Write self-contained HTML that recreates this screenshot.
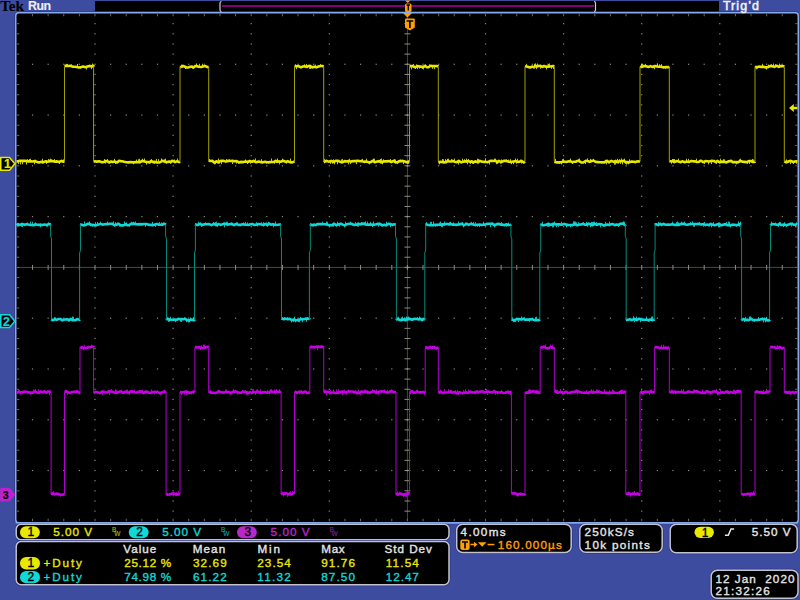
<!DOCTYPE html>
<html><head><meta charset="utf-8"><style>
html,body{margin:0;padding:0;width:800px;height:600px;overflow:hidden;background:#3d4c9e;}
svg{position:absolute;left:0;top:0;display:block}
</style></head><body>
<svg width="800" height="600" viewBox="0 0 800 600"><rect width="800" height="600" fill="#3d4c9e"/><rect x="95" y="1" width="624" height="11" fill="#000"/><rect x="15.75" y="12.75" width="782.5" height="510" rx="3" fill="#000" stroke="#2e3a8a" stroke-width="3"/><rect x="15.75" y="12.75" width="782.5" height="510" rx="3" fill="#000" stroke="#86a8ee" stroke-width="1.5"/><rect x="94.40" y="23.06" width="1.2" height="1.2" fill="#8c8c80"/><rect x="94.40" y="33.21" width="1.2" height="1.2" fill="#8c8c80"/><rect x="94.40" y="43.37" width="1.2" height="1.2" fill="#8c8c80"/><rect x="94.40" y="53.52" width="1.2" height="1.2" fill="#8c8c80"/><rect x="94.40" y="63.68" width="1.2" height="1.2" fill="#8c8c80"/><rect x="94.40" y="73.84" width="1.2" height="1.2" fill="#8c8c80"/><rect x="94.40" y="83.99" width="1.2" height="1.2" fill="#8c8c80"/><rect x="94.40" y="94.15" width="1.2" height="1.2" fill="#8c8c80"/><rect x="94.40" y="104.30" width="1.2" height="1.2" fill="#8c8c80"/><rect x="94.40" y="114.46" width="1.2" height="1.2" fill="#8c8c80"/><rect x="94.40" y="124.62" width="1.2" height="1.2" fill="#8c8c80"/><rect x="94.40" y="134.77" width="1.2" height="1.2" fill="#8c8c80"/><rect x="94.40" y="144.93" width="1.2" height="1.2" fill="#8c8c80"/><rect x="94.40" y="155.08" width="1.2" height="1.2" fill="#8c8c80"/><rect x="94.40" y="165.24" width="1.2" height="1.2" fill="#8c8c80"/><rect x="94.40" y="175.40" width="1.2" height="1.2" fill="#8c8c80"/><rect x="94.40" y="185.55" width="1.2" height="1.2" fill="#8c8c80"/><rect x="94.40" y="195.71" width="1.2" height="1.2" fill="#8c8c80"/><rect x="94.40" y="205.86" width="1.2" height="1.2" fill="#8c8c80"/><rect x="94.40" y="216.02" width="1.2" height="1.2" fill="#8c8c80"/><rect x="94.40" y="226.18" width="1.2" height="1.2" fill="#8c8c80"/><rect x="94.40" y="236.33" width="1.2" height="1.2" fill="#8c8c80"/><rect x="94.40" y="246.49" width="1.2" height="1.2" fill="#8c8c80"/><rect x="94.40" y="256.64" width="1.2" height="1.2" fill="#8c8c80"/><rect x="94.40" y="266.80" width="1.2" height="1.2" fill="#8c8c80"/><rect x="94.40" y="276.96" width="1.2" height="1.2" fill="#8c8c80"/><rect x="94.40" y="287.11" width="1.2" height="1.2" fill="#8c8c80"/><rect x="94.40" y="297.27" width="1.2" height="1.2" fill="#8c8c80"/><rect x="94.40" y="307.42" width="1.2" height="1.2" fill="#8c8c80"/><rect x="94.40" y="317.58" width="1.2" height="1.2" fill="#8c8c80"/><rect x="94.40" y="327.74" width="1.2" height="1.2" fill="#8c8c80"/><rect x="94.40" y="337.89" width="1.2" height="1.2" fill="#8c8c80"/><rect x="94.40" y="348.05" width="1.2" height="1.2" fill="#8c8c80"/><rect x="94.40" y="358.20" width="1.2" height="1.2" fill="#8c8c80"/><rect x="94.40" y="368.36" width="1.2" height="1.2" fill="#8c8c80"/><rect x="94.40" y="378.52" width="1.2" height="1.2" fill="#8c8c80"/><rect x="94.40" y="388.67" width="1.2" height="1.2" fill="#8c8c80"/><rect x="94.40" y="398.83" width="1.2" height="1.2" fill="#8c8c80"/><rect x="94.40" y="408.98" width="1.2" height="1.2" fill="#8c8c80"/><rect x="94.40" y="419.14" width="1.2" height="1.2" fill="#8c8c80"/><rect x="94.40" y="429.30" width="1.2" height="1.2" fill="#8c8c80"/><rect x="94.40" y="439.45" width="1.2" height="1.2" fill="#8c8c80"/><rect x="94.40" y="449.61" width="1.2" height="1.2" fill="#8c8c80"/><rect x="94.40" y="459.76" width="1.2" height="1.2" fill="#8c8c80"/><rect x="94.40" y="469.92" width="1.2" height="1.2" fill="#8c8c80"/><rect x="94.40" y="480.08" width="1.2" height="1.2" fill="#8c8c80"/><rect x="94.40" y="490.23" width="1.2" height="1.2" fill="#8c8c80"/><rect x="94.40" y="500.39" width="1.2" height="1.2" fill="#8c8c80"/><rect x="94.40" y="510.54" width="1.2" height="1.2" fill="#8c8c80"/><rect x="172.50" y="23.06" width="1.2" height="1.2" fill="#8c8c80"/><rect x="172.50" y="33.21" width="1.2" height="1.2" fill="#8c8c80"/><rect x="172.50" y="43.37" width="1.2" height="1.2" fill="#8c8c80"/><rect x="172.50" y="53.52" width="1.2" height="1.2" fill="#8c8c80"/><rect x="172.50" y="63.68" width="1.2" height="1.2" fill="#8c8c80"/><rect x="172.50" y="73.84" width="1.2" height="1.2" fill="#8c8c80"/><rect x="172.50" y="83.99" width="1.2" height="1.2" fill="#8c8c80"/><rect x="172.50" y="94.15" width="1.2" height="1.2" fill="#8c8c80"/><rect x="172.50" y="104.30" width="1.2" height="1.2" fill="#8c8c80"/><rect x="172.50" y="114.46" width="1.2" height="1.2" fill="#8c8c80"/><rect x="172.50" y="124.62" width="1.2" height="1.2" fill="#8c8c80"/><rect x="172.50" y="134.77" width="1.2" height="1.2" fill="#8c8c80"/><rect x="172.50" y="144.93" width="1.2" height="1.2" fill="#8c8c80"/><rect x="172.50" y="155.08" width="1.2" height="1.2" fill="#8c8c80"/><rect x="172.50" y="165.24" width="1.2" height="1.2" fill="#8c8c80"/><rect x="172.50" y="175.40" width="1.2" height="1.2" fill="#8c8c80"/><rect x="172.50" y="185.55" width="1.2" height="1.2" fill="#8c8c80"/><rect x="172.50" y="195.71" width="1.2" height="1.2" fill="#8c8c80"/><rect x="172.50" y="205.86" width="1.2" height="1.2" fill="#8c8c80"/><rect x="172.50" y="216.02" width="1.2" height="1.2" fill="#8c8c80"/><rect x="172.50" y="226.18" width="1.2" height="1.2" fill="#8c8c80"/><rect x="172.50" y="236.33" width="1.2" height="1.2" fill="#8c8c80"/><rect x="172.50" y="246.49" width="1.2" height="1.2" fill="#8c8c80"/><rect x="172.50" y="256.64" width="1.2" height="1.2" fill="#8c8c80"/><rect x="172.50" y="266.80" width="1.2" height="1.2" fill="#8c8c80"/><rect x="172.50" y="276.96" width="1.2" height="1.2" fill="#8c8c80"/><rect x="172.50" y="287.11" width="1.2" height="1.2" fill="#8c8c80"/><rect x="172.50" y="297.27" width="1.2" height="1.2" fill="#8c8c80"/><rect x="172.50" y="307.42" width="1.2" height="1.2" fill="#8c8c80"/><rect x="172.50" y="317.58" width="1.2" height="1.2" fill="#8c8c80"/><rect x="172.50" y="327.74" width="1.2" height="1.2" fill="#8c8c80"/><rect x="172.50" y="337.89" width="1.2" height="1.2" fill="#8c8c80"/><rect x="172.50" y="348.05" width="1.2" height="1.2" fill="#8c8c80"/><rect x="172.50" y="358.20" width="1.2" height="1.2" fill="#8c8c80"/><rect x="172.50" y="368.36" width="1.2" height="1.2" fill="#8c8c80"/><rect x="172.50" y="378.52" width="1.2" height="1.2" fill="#8c8c80"/><rect x="172.50" y="388.67" width="1.2" height="1.2" fill="#8c8c80"/><rect x="172.50" y="398.83" width="1.2" height="1.2" fill="#8c8c80"/><rect x="172.50" y="408.98" width="1.2" height="1.2" fill="#8c8c80"/><rect x="172.50" y="419.14" width="1.2" height="1.2" fill="#8c8c80"/><rect x="172.50" y="429.30" width="1.2" height="1.2" fill="#8c8c80"/><rect x="172.50" y="439.45" width="1.2" height="1.2" fill="#8c8c80"/><rect x="172.50" y="449.61" width="1.2" height="1.2" fill="#8c8c80"/><rect x="172.50" y="459.76" width="1.2" height="1.2" fill="#8c8c80"/><rect x="172.50" y="469.92" width="1.2" height="1.2" fill="#8c8c80"/><rect x="172.50" y="480.08" width="1.2" height="1.2" fill="#8c8c80"/><rect x="172.50" y="490.23" width="1.2" height="1.2" fill="#8c8c80"/><rect x="172.50" y="500.39" width="1.2" height="1.2" fill="#8c8c80"/><rect x="172.50" y="510.54" width="1.2" height="1.2" fill="#8c8c80"/><rect x="250.60" y="23.06" width="1.2" height="1.2" fill="#8c8c80"/><rect x="250.60" y="33.21" width="1.2" height="1.2" fill="#8c8c80"/><rect x="250.60" y="43.37" width="1.2" height="1.2" fill="#8c8c80"/><rect x="250.60" y="53.52" width="1.2" height="1.2" fill="#8c8c80"/><rect x="250.60" y="63.68" width="1.2" height="1.2" fill="#8c8c80"/><rect x="250.60" y="73.84" width="1.2" height="1.2" fill="#8c8c80"/><rect x="250.60" y="83.99" width="1.2" height="1.2" fill="#8c8c80"/><rect x="250.60" y="94.15" width="1.2" height="1.2" fill="#8c8c80"/><rect x="250.60" y="104.30" width="1.2" height="1.2" fill="#8c8c80"/><rect x="250.60" y="114.46" width="1.2" height="1.2" fill="#8c8c80"/><rect x="250.60" y="124.62" width="1.2" height="1.2" fill="#8c8c80"/><rect x="250.60" y="134.77" width="1.2" height="1.2" fill="#8c8c80"/><rect x="250.60" y="144.93" width="1.2" height="1.2" fill="#8c8c80"/><rect x="250.60" y="155.08" width="1.2" height="1.2" fill="#8c8c80"/><rect x="250.60" y="165.24" width="1.2" height="1.2" fill="#8c8c80"/><rect x="250.60" y="175.40" width="1.2" height="1.2" fill="#8c8c80"/><rect x="250.60" y="185.55" width="1.2" height="1.2" fill="#8c8c80"/><rect x="250.60" y="195.71" width="1.2" height="1.2" fill="#8c8c80"/><rect x="250.60" y="205.86" width="1.2" height="1.2" fill="#8c8c80"/><rect x="250.60" y="216.02" width="1.2" height="1.2" fill="#8c8c80"/><rect x="250.60" y="226.18" width="1.2" height="1.2" fill="#8c8c80"/><rect x="250.60" y="236.33" width="1.2" height="1.2" fill="#8c8c80"/><rect x="250.60" y="246.49" width="1.2" height="1.2" fill="#8c8c80"/><rect x="250.60" y="256.64" width="1.2" height="1.2" fill="#8c8c80"/><rect x="250.60" y="266.80" width="1.2" height="1.2" fill="#8c8c80"/><rect x="250.60" y="276.96" width="1.2" height="1.2" fill="#8c8c80"/><rect x="250.60" y="287.11" width="1.2" height="1.2" fill="#8c8c80"/><rect x="250.60" y="297.27" width="1.2" height="1.2" fill="#8c8c80"/><rect x="250.60" y="307.42" width="1.2" height="1.2" fill="#8c8c80"/><rect x="250.60" y="317.58" width="1.2" height="1.2" fill="#8c8c80"/><rect x="250.60" y="327.74" width="1.2" height="1.2" fill="#8c8c80"/><rect x="250.60" y="337.89" width="1.2" height="1.2" fill="#8c8c80"/><rect x="250.60" y="348.05" width="1.2" height="1.2" fill="#8c8c80"/><rect x="250.60" y="358.20" width="1.2" height="1.2" fill="#8c8c80"/><rect x="250.60" y="368.36" width="1.2" height="1.2" fill="#8c8c80"/><rect x="250.60" y="378.52" width="1.2" height="1.2" fill="#8c8c80"/><rect x="250.60" y="388.67" width="1.2" height="1.2" fill="#8c8c80"/><rect x="250.60" y="398.83" width="1.2" height="1.2" fill="#8c8c80"/><rect x="250.60" y="408.98" width="1.2" height="1.2" fill="#8c8c80"/><rect x="250.60" y="419.14" width="1.2" height="1.2" fill="#8c8c80"/><rect x="250.60" y="429.30" width="1.2" height="1.2" fill="#8c8c80"/><rect x="250.60" y="439.45" width="1.2" height="1.2" fill="#8c8c80"/><rect x="250.60" y="449.61" width="1.2" height="1.2" fill="#8c8c80"/><rect x="250.60" y="459.76" width="1.2" height="1.2" fill="#8c8c80"/><rect x="250.60" y="469.92" width="1.2" height="1.2" fill="#8c8c80"/><rect x="250.60" y="480.08" width="1.2" height="1.2" fill="#8c8c80"/><rect x="250.60" y="490.23" width="1.2" height="1.2" fill="#8c8c80"/><rect x="250.60" y="500.39" width="1.2" height="1.2" fill="#8c8c80"/><rect x="250.60" y="510.54" width="1.2" height="1.2" fill="#8c8c80"/><rect x="328.70" y="23.06" width="1.2" height="1.2" fill="#8c8c80"/><rect x="328.70" y="33.21" width="1.2" height="1.2" fill="#8c8c80"/><rect x="328.70" y="43.37" width="1.2" height="1.2" fill="#8c8c80"/><rect x="328.70" y="53.52" width="1.2" height="1.2" fill="#8c8c80"/><rect x="328.70" y="63.68" width="1.2" height="1.2" fill="#8c8c80"/><rect x="328.70" y="73.84" width="1.2" height="1.2" fill="#8c8c80"/><rect x="328.70" y="83.99" width="1.2" height="1.2" fill="#8c8c80"/><rect x="328.70" y="94.15" width="1.2" height="1.2" fill="#8c8c80"/><rect x="328.70" y="104.30" width="1.2" height="1.2" fill="#8c8c80"/><rect x="328.70" y="114.46" width="1.2" height="1.2" fill="#8c8c80"/><rect x="328.70" y="124.62" width="1.2" height="1.2" fill="#8c8c80"/><rect x="328.70" y="134.77" width="1.2" height="1.2" fill="#8c8c80"/><rect x="328.70" y="144.93" width="1.2" height="1.2" fill="#8c8c80"/><rect x="328.70" y="155.08" width="1.2" height="1.2" fill="#8c8c80"/><rect x="328.70" y="165.24" width="1.2" height="1.2" fill="#8c8c80"/><rect x="328.70" y="175.40" width="1.2" height="1.2" fill="#8c8c80"/><rect x="328.70" y="185.55" width="1.2" height="1.2" fill="#8c8c80"/><rect x="328.70" y="195.71" width="1.2" height="1.2" fill="#8c8c80"/><rect x="328.70" y="205.86" width="1.2" height="1.2" fill="#8c8c80"/><rect x="328.70" y="216.02" width="1.2" height="1.2" fill="#8c8c80"/><rect x="328.70" y="226.18" width="1.2" height="1.2" fill="#8c8c80"/><rect x="328.70" y="236.33" width="1.2" height="1.2" fill="#8c8c80"/><rect x="328.70" y="246.49" width="1.2" height="1.2" fill="#8c8c80"/><rect x="328.70" y="256.64" width="1.2" height="1.2" fill="#8c8c80"/><rect x="328.70" y="266.80" width="1.2" height="1.2" fill="#8c8c80"/><rect x="328.70" y="276.96" width="1.2" height="1.2" fill="#8c8c80"/><rect x="328.70" y="287.11" width="1.2" height="1.2" fill="#8c8c80"/><rect x="328.70" y="297.27" width="1.2" height="1.2" fill="#8c8c80"/><rect x="328.70" y="307.42" width="1.2" height="1.2" fill="#8c8c80"/><rect x="328.70" y="317.58" width="1.2" height="1.2" fill="#8c8c80"/><rect x="328.70" y="327.74" width="1.2" height="1.2" fill="#8c8c80"/><rect x="328.70" y="337.89" width="1.2" height="1.2" fill="#8c8c80"/><rect x="328.70" y="348.05" width="1.2" height="1.2" fill="#8c8c80"/><rect x="328.70" y="358.20" width="1.2" height="1.2" fill="#8c8c80"/><rect x="328.70" y="368.36" width="1.2" height="1.2" fill="#8c8c80"/><rect x="328.70" y="378.52" width="1.2" height="1.2" fill="#8c8c80"/><rect x="328.70" y="388.67" width="1.2" height="1.2" fill="#8c8c80"/><rect x="328.70" y="398.83" width="1.2" height="1.2" fill="#8c8c80"/><rect x="328.70" y="408.98" width="1.2" height="1.2" fill="#8c8c80"/><rect x="328.70" y="419.14" width="1.2" height="1.2" fill="#8c8c80"/><rect x="328.70" y="429.30" width="1.2" height="1.2" fill="#8c8c80"/><rect x="328.70" y="439.45" width="1.2" height="1.2" fill="#8c8c80"/><rect x="328.70" y="449.61" width="1.2" height="1.2" fill="#8c8c80"/><rect x="328.70" y="459.76" width="1.2" height="1.2" fill="#8c8c80"/><rect x="328.70" y="469.92" width="1.2" height="1.2" fill="#8c8c80"/><rect x="328.70" y="480.08" width="1.2" height="1.2" fill="#8c8c80"/><rect x="328.70" y="490.23" width="1.2" height="1.2" fill="#8c8c80"/><rect x="328.70" y="500.39" width="1.2" height="1.2" fill="#8c8c80"/><rect x="328.70" y="510.54" width="1.2" height="1.2" fill="#8c8c80"/><rect x="484.90" y="23.06" width="1.2" height="1.2" fill="#8c8c80"/><rect x="484.90" y="33.21" width="1.2" height="1.2" fill="#8c8c80"/><rect x="484.90" y="43.37" width="1.2" height="1.2" fill="#8c8c80"/><rect x="484.90" y="53.52" width="1.2" height="1.2" fill="#8c8c80"/><rect x="484.90" y="63.68" width="1.2" height="1.2" fill="#8c8c80"/><rect x="484.90" y="73.84" width="1.2" height="1.2" fill="#8c8c80"/><rect x="484.90" y="83.99" width="1.2" height="1.2" fill="#8c8c80"/><rect x="484.90" y="94.15" width="1.2" height="1.2" fill="#8c8c80"/><rect x="484.90" y="104.30" width="1.2" height="1.2" fill="#8c8c80"/><rect x="484.90" y="114.46" width="1.2" height="1.2" fill="#8c8c80"/><rect x="484.90" y="124.62" width="1.2" height="1.2" fill="#8c8c80"/><rect x="484.90" y="134.77" width="1.2" height="1.2" fill="#8c8c80"/><rect x="484.90" y="144.93" width="1.2" height="1.2" fill="#8c8c80"/><rect x="484.90" y="155.08" width="1.2" height="1.2" fill="#8c8c80"/><rect x="484.90" y="165.24" width="1.2" height="1.2" fill="#8c8c80"/><rect x="484.90" y="175.40" width="1.2" height="1.2" fill="#8c8c80"/><rect x="484.90" y="185.55" width="1.2" height="1.2" fill="#8c8c80"/><rect x="484.90" y="195.71" width="1.2" height="1.2" fill="#8c8c80"/><rect x="484.90" y="205.86" width="1.2" height="1.2" fill="#8c8c80"/><rect x="484.90" y="216.02" width="1.2" height="1.2" fill="#8c8c80"/><rect x="484.90" y="226.18" width="1.2" height="1.2" fill="#8c8c80"/><rect x="484.90" y="236.33" width="1.2" height="1.2" fill="#8c8c80"/><rect x="484.90" y="246.49" width="1.2" height="1.2" fill="#8c8c80"/><rect x="484.90" y="256.64" width="1.2" height="1.2" fill="#8c8c80"/><rect x="484.90" y="266.80" width="1.2" height="1.2" fill="#8c8c80"/><rect x="484.90" y="276.96" width="1.2" height="1.2" fill="#8c8c80"/><rect x="484.90" y="287.11" width="1.2" height="1.2" fill="#8c8c80"/><rect x="484.90" y="297.27" width="1.2" height="1.2" fill="#8c8c80"/><rect x="484.90" y="307.42" width="1.2" height="1.2" fill="#8c8c80"/><rect x="484.90" y="317.58" width="1.2" height="1.2" fill="#8c8c80"/><rect x="484.90" y="327.74" width="1.2" height="1.2" fill="#8c8c80"/><rect x="484.90" y="337.89" width="1.2" height="1.2" fill="#8c8c80"/><rect x="484.90" y="348.05" width="1.2" height="1.2" fill="#8c8c80"/><rect x="484.90" y="358.20" width="1.2" height="1.2" fill="#8c8c80"/><rect x="484.90" y="368.36" width="1.2" height="1.2" fill="#8c8c80"/><rect x="484.90" y="378.52" width="1.2" height="1.2" fill="#8c8c80"/><rect x="484.90" y="388.67" width="1.2" height="1.2" fill="#8c8c80"/><rect x="484.90" y="398.83" width="1.2" height="1.2" fill="#8c8c80"/><rect x="484.90" y="408.98" width="1.2" height="1.2" fill="#8c8c80"/><rect x="484.90" y="419.14" width="1.2" height="1.2" fill="#8c8c80"/><rect x="484.90" y="429.30" width="1.2" height="1.2" fill="#8c8c80"/><rect x="484.90" y="439.45" width="1.2" height="1.2" fill="#8c8c80"/><rect x="484.90" y="449.61" width="1.2" height="1.2" fill="#8c8c80"/><rect x="484.90" y="459.76" width="1.2" height="1.2" fill="#8c8c80"/><rect x="484.90" y="469.92" width="1.2" height="1.2" fill="#8c8c80"/><rect x="484.90" y="480.08" width="1.2" height="1.2" fill="#8c8c80"/><rect x="484.90" y="490.23" width="1.2" height="1.2" fill="#8c8c80"/><rect x="484.90" y="500.39" width="1.2" height="1.2" fill="#8c8c80"/><rect x="484.90" y="510.54" width="1.2" height="1.2" fill="#8c8c80"/><rect x="563.00" y="23.06" width="1.2" height="1.2" fill="#8c8c80"/><rect x="563.00" y="33.21" width="1.2" height="1.2" fill="#8c8c80"/><rect x="563.00" y="43.37" width="1.2" height="1.2" fill="#8c8c80"/><rect x="563.00" y="53.52" width="1.2" height="1.2" fill="#8c8c80"/><rect x="563.00" y="63.68" width="1.2" height="1.2" fill="#8c8c80"/><rect x="563.00" y="73.84" width="1.2" height="1.2" fill="#8c8c80"/><rect x="563.00" y="83.99" width="1.2" height="1.2" fill="#8c8c80"/><rect x="563.00" y="94.15" width="1.2" height="1.2" fill="#8c8c80"/><rect x="563.00" y="104.30" width="1.2" height="1.2" fill="#8c8c80"/><rect x="563.00" y="114.46" width="1.2" height="1.2" fill="#8c8c80"/><rect x="563.00" y="124.62" width="1.2" height="1.2" fill="#8c8c80"/><rect x="563.00" y="134.77" width="1.2" height="1.2" fill="#8c8c80"/><rect x="563.00" y="144.93" width="1.2" height="1.2" fill="#8c8c80"/><rect x="563.00" y="155.08" width="1.2" height="1.2" fill="#8c8c80"/><rect x="563.00" y="165.24" width="1.2" height="1.2" fill="#8c8c80"/><rect x="563.00" y="175.40" width="1.2" height="1.2" fill="#8c8c80"/><rect x="563.00" y="185.55" width="1.2" height="1.2" fill="#8c8c80"/><rect x="563.00" y="195.71" width="1.2" height="1.2" fill="#8c8c80"/><rect x="563.00" y="205.86" width="1.2" height="1.2" fill="#8c8c80"/><rect x="563.00" y="216.02" width="1.2" height="1.2" fill="#8c8c80"/><rect x="563.00" y="226.18" width="1.2" height="1.2" fill="#8c8c80"/><rect x="563.00" y="236.33" width="1.2" height="1.2" fill="#8c8c80"/><rect x="563.00" y="246.49" width="1.2" height="1.2" fill="#8c8c80"/><rect x="563.00" y="256.64" width="1.2" height="1.2" fill="#8c8c80"/><rect x="563.00" y="266.80" width="1.2" height="1.2" fill="#8c8c80"/><rect x="563.00" y="276.96" width="1.2" height="1.2" fill="#8c8c80"/><rect x="563.00" y="287.11" width="1.2" height="1.2" fill="#8c8c80"/><rect x="563.00" y="297.27" width="1.2" height="1.2" fill="#8c8c80"/><rect x="563.00" y="307.42" width="1.2" height="1.2" fill="#8c8c80"/><rect x="563.00" y="317.58" width="1.2" height="1.2" fill="#8c8c80"/><rect x="563.00" y="327.74" width="1.2" height="1.2" fill="#8c8c80"/><rect x="563.00" y="337.89" width="1.2" height="1.2" fill="#8c8c80"/><rect x="563.00" y="348.05" width="1.2" height="1.2" fill="#8c8c80"/><rect x="563.00" y="358.20" width="1.2" height="1.2" fill="#8c8c80"/><rect x="563.00" y="368.36" width="1.2" height="1.2" fill="#8c8c80"/><rect x="563.00" y="378.52" width="1.2" height="1.2" fill="#8c8c80"/><rect x="563.00" y="388.67" width="1.2" height="1.2" fill="#8c8c80"/><rect x="563.00" y="398.83" width="1.2" height="1.2" fill="#8c8c80"/><rect x="563.00" y="408.98" width="1.2" height="1.2" fill="#8c8c80"/><rect x="563.00" y="419.14" width="1.2" height="1.2" fill="#8c8c80"/><rect x="563.00" y="429.30" width="1.2" height="1.2" fill="#8c8c80"/><rect x="563.00" y="439.45" width="1.2" height="1.2" fill="#8c8c80"/><rect x="563.00" y="449.61" width="1.2" height="1.2" fill="#8c8c80"/><rect x="563.00" y="459.76" width="1.2" height="1.2" fill="#8c8c80"/><rect x="563.00" y="469.92" width="1.2" height="1.2" fill="#8c8c80"/><rect x="563.00" y="480.08" width="1.2" height="1.2" fill="#8c8c80"/><rect x="563.00" y="490.23" width="1.2" height="1.2" fill="#8c8c80"/><rect x="563.00" y="500.39" width="1.2" height="1.2" fill="#8c8c80"/><rect x="563.00" y="510.54" width="1.2" height="1.2" fill="#8c8c80"/><rect x="641.10" y="23.06" width="1.2" height="1.2" fill="#8c8c80"/><rect x="641.10" y="33.21" width="1.2" height="1.2" fill="#8c8c80"/><rect x="641.10" y="43.37" width="1.2" height="1.2" fill="#8c8c80"/><rect x="641.10" y="53.52" width="1.2" height="1.2" fill="#8c8c80"/><rect x="641.10" y="63.68" width="1.2" height="1.2" fill="#8c8c80"/><rect x="641.10" y="73.84" width="1.2" height="1.2" fill="#8c8c80"/><rect x="641.10" y="83.99" width="1.2" height="1.2" fill="#8c8c80"/><rect x="641.10" y="94.15" width="1.2" height="1.2" fill="#8c8c80"/><rect x="641.10" y="104.30" width="1.2" height="1.2" fill="#8c8c80"/><rect x="641.10" y="114.46" width="1.2" height="1.2" fill="#8c8c80"/><rect x="641.10" y="124.62" width="1.2" height="1.2" fill="#8c8c80"/><rect x="641.10" y="134.77" width="1.2" height="1.2" fill="#8c8c80"/><rect x="641.10" y="144.93" width="1.2" height="1.2" fill="#8c8c80"/><rect x="641.10" y="155.08" width="1.2" height="1.2" fill="#8c8c80"/><rect x="641.10" y="165.24" width="1.2" height="1.2" fill="#8c8c80"/><rect x="641.10" y="175.40" width="1.2" height="1.2" fill="#8c8c80"/><rect x="641.10" y="185.55" width="1.2" height="1.2" fill="#8c8c80"/><rect x="641.10" y="195.71" width="1.2" height="1.2" fill="#8c8c80"/><rect x="641.10" y="205.86" width="1.2" height="1.2" fill="#8c8c80"/><rect x="641.10" y="216.02" width="1.2" height="1.2" fill="#8c8c80"/><rect x="641.10" y="226.18" width="1.2" height="1.2" fill="#8c8c80"/><rect x="641.10" y="236.33" width="1.2" height="1.2" fill="#8c8c80"/><rect x="641.10" y="246.49" width="1.2" height="1.2" fill="#8c8c80"/><rect x="641.10" y="256.64" width="1.2" height="1.2" fill="#8c8c80"/><rect x="641.10" y="266.80" width="1.2" height="1.2" fill="#8c8c80"/><rect x="641.10" y="276.96" width="1.2" height="1.2" fill="#8c8c80"/><rect x="641.10" y="287.11" width="1.2" height="1.2" fill="#8c8c80"/><rect x="641.10" y="297.27" width="1.2" height="1.2" fill="#8c8c80"/><rect x="641.10" y="307.42" width="1.2" height="1.2" fill="#8c8c80"/><rect x="641.10" y="317.58" width="1.2" height="1.2" fill="#8c8c80"/><rect x="641.10" y="327.74" width="1.2" height="1.2" fill="#8c8c80"/><rect x="641.10" y="337.89" width="1.2" height="1.2" fill="#8c8c80"/><rect x="641.10" y="348.05" width="1.2" height="1.2" fill="#8c8c80"/><rect x="641.10" y="358.20" width="1.2" height="1.2" fill="#8c8c80"/><rect x="641.10" y="368.36" width="1.2" height="1.2" fill="#8c8c80"/><rect x="641.10" y="378.52" width="1.2" height="1.2" fill="#8c8c80"/><rect x="641.10" y="388.67" width="1.2" height="1.2" fill="#8c8c80"/><rect x="641.10" y="398.83" width="1.2" height="1.2" fill="#8c8c80"/><rect x="641.10" y="408.98" width="1.2" height="1.2" fill="#8c8c80"/><rect x="641.10" y="419.14" width="1.2" height="1.2" fill="#8c8c80"/><rect x="641.10" y="429.30" width="1.2" height="1.2" fill="#8c8c80"/><rect x="641.10" y="439.45" width="1.2" height="1.2" fill="#8c8c80"/><rect x="641.10" y="449.61" width="1.2" height="1.2" fill="#8c8c80"/><rect x="641.10" y="459.76" width="1.2" height="1.2" fill="#8c8c80"/><rect x="641.10" y="469.92" width="1.2" height="1.2" fill="#8c8c80"/><rect x="641.10" y="480.08" width="1.2" height="1.2" fill="#8c8c80"/><rect x="641.10" y="490.23" width="1.2" height="1.2" fill="#8c8c80"/><rect x="641.10" y="500.39" width="1.2" height="1.2" fill="#8c8c80"/><rect x="641.10" y="510.54" width="1.2" height="1.2" fill="#8c8c80"/><rect x="719.20" y="23.06" width="1.2" height="1.2" fill="#8c8c80"/><rect x="719.20" y="33.21" width="1.2" height="1.2" fill="#8c8c80"/><rect x="719.20" y="43.37" width="1.2" height="1.2" fill="#8c8c80"/><rect x="719.20" y="53.52" width="1.2" height="1.2" fill="#8c8c80"/><rect x="719.20" y="63.68" width="1.2" height="1.2" fill="#8c8c80"/><rect x="719.20" y="73.84" width="1.2" height="1.2" fill="#8c8c80"/><rect x="719.20" y="83.99" width="1.2" height="1.2" fill="#8c8c80"/><rect x="719.20" y="94.15" width="1.2" height="1.2" fill="#8c8c80"/><rect x="719.20" y="104.30" width="1.2" height="1.2" fill="#8c8c80"/><rect x="719.20" y="114.46" width="1.2" height="1.2" fill="#8c8c80"/><rect x="719.20" y="124.62" width="1.2" height="1.2" fill="#8c8c80"/><rect x="719.20" y="134.77" width="1.2" height="1.2" fill="#8c8c80"/><rect x="719.20" y="144.93" width="1.2" height="1.2" fill="#8c8c80"/><rect x="719.20" y="155.08" width="1.2" height="1.2" fill="#8c8c80"/><rect x="719.20" y="165.24" width="1.2" height="1.2" fill="#8c8c80"/><rect x="719.20" y="175.40" width="1.2" height="1.2" fill="#8c8c80"/><rect x="719.20" y="185.55" width="1.2" height="1.2" fill="#8c8c80"/><rect x="719.20" y="195.71" width="1.2" height="1.2" fill="#8c8c80"/><rect x="719.20" y="205.86" width="1.2" height="1.2" fill="#8c8c80"/><rect x="719.20" y="216.02" width="1.2" height="1.2" fill="#8c8c80"/><rect x="719.20" y="226.18" width="1.2" height="1.2" fill="#8c8c80"/><rect x="719.20" y="236.33" width="1.2" height="1.2" fill="#8c8c80"/><rect x="719.20" y="246.49" width="1.2" height="1.2" fill="#8c8c80"/><rect x="719.20" y="256.64" width="1.2" height="1.2" fill="#8c8c80"/><rect x="719.20" y="266.80" width="1.2" height="1.2" fill="#8c8c80"/><rect x="719.20" y="276.96" width="1.2" height="1.2" fill="#8c8c80"/><rect x="719.20" y="287.11" width="1.2" height="1.2" fill="#8c8c80"/><rect x="719.20" y="297.27" width="1.2" height="1.2" fill="#8c8c80"/><rect x="719.20" y="307.42" width="1.2" height="1.2" fill="#8c8c80"/><rect x="719.20" y="317.58" width="1.2" height="1.2" fill="#8c8c80"/><rect x="719.20" y="327.74" width="1.2" height="1.2" fill="#8c8c80"/><rect x="719.20" y="337.89" width="1.2" height="1.2" fill="#8c8c80"/><rect x="719.20" y="348.05" width="1.2" height="1.2" fill="#8c8c80"/><rect x="719.20" y="358.20" width="1.2" height="1.2" fill="#8c8c80"/><rect x="719.20" y="368.36" width="1.2" height="1.2" fill="#8c8c80"/><rect x="719.20" y="378.52" width="1.2" height="1.2" fill="#8c8c80"/><rect x="719.20" y="388.67" width="1.2" height="1.2" fill="#8c8c80"/><rect x="719.20" y="398.83" width="1.2" height="1.2" fill="#8c8c80"/><rect x="719.20" y="408.98" width="1.2" height="1.2" fill="#8c8c80"/><rect x="719.20" y="419.14" width="1.2" height="1.2" fill="#8c8c80"/><rect x="719.20" y="429.30" width="1.2" height="1.2" fill="#8c8c80"/><rect x="719.20" y="439.45" width="1.2" height="1.2" fill="#8c8c80"/><rect x="719.20" y="449.61" width="1.2" height="1.2" fill="#8c8c80"/><rect x="719.20" y="459.76" width="1.2" height="1.2" fill="#8c8c80"/><rect x="719.20" y="469.92" width="1.2" height="1.2" fill="#8c8c80"/><rect x="719.20" y="480.08" width="1.2" height="1.2" fill="#8c8c80"/><rect x="719.20" y="490.23" width="1.2" height="1.2" fill="#8c8c80"/><rect x="719.20" y="500.39" width="1.2" height="1.2" fill="#8c8c80"/><rect x="719.20" y="510.54" width="1.2" height="1.2" fill="#8c8c80"/><rect x="31.92" y="63.68" width="1.2" height="1.2" fill="#8c8c80"/><rect x="47.54" y="63.68" width="1.2" height="1.2" fill="#8c8c80"/><rect x="63.16" y="63.68" width="1.2" height="1.2" fill="#8c8c80"/><rect x="78.78" y="63.68" width="1.2" height="1.2" fill="#8c8c80"/><rect x="110.02" y="63.68" width="1.2" height="1.2" fill="#8c8c80"/><rect x="125.64" y="63.68" width="1.2" height="1.2" fill="#8c8c80"/><rect x="141.26" y="63.68" width="1.2" height="1.2" fill="#8c8c80"/><rect x="156.88" y="63.68" width="1.2" height="1.2" fill="#8c8c80"/><rect x="188.12" y="63.68" width="1.2" height="1.2" fill="#8c8c80"/><rect x="203.74" y="63.68" width="1.2" height="1.2" fill="#8c8c80"/><rect x="219.36" y="63.68" width="1.2" height="1.2" fill="#8c8c80"/><rect x="234.98" y="63.68" width="1.2" height="1.2" fill="#8c8c80"/><rect x="266.22" y="63.68" width="1.2" height="1.2" fill="#8c8c80"/><rect x="281.84" y="63.68" width="1.2" height="1.2" fill="#8c8c80"/><rect x="297.46" y="63.68" width="1.2" height="1.2" fill="#8c8c80"/><rect x="313.08" y="63.68" width="1.2" height="1.2" fill="#8c8c80"/><rect x="344.32" y="63.68" width="1.2" height="1.2" fill="#8c8c80"/><rect x="359.94" y="63.68" width="1.2" height="1.2" fill="#8c8c80"/><rect x="375.56" y="63.68" width="1.2" height="1.2" fill="#8c8c80"/><rect x="391.18" y="63.68" width="1.2" height="1.2" fill="#8c8c80"/><rect x="422.42" y="63.68" width="1.2" height="1.2" fill="#8c8c80"/><rect x="438.04" y="63.68" width="1.2" height="1.2" fill="#8c8c80"/><rect x="453.66" y="63.68" width="1.2" height="1.2" fill="#8c8c80"/><rect x="469.28" y="63.68" width="1.2" height="1.2" fill="#8c8c80"/><rect x="500.52" y="63.68" width="1.2" height="1.2" fill="#8c8c80"/><rect x="516.14" y="63.68" width="1.2" height="1.2" fill="#8c8c80"/><rect x="531.76" y="63.68" width="1.2" height="1.2" fill="#8c8c80"/><rect x="547.38" y="63.68" width="1.2" height="1.2" fill="#8c8c80"/><rect x="578.62" y="63.68" width="1.2" height="1.2" fill="#8c8c80"/><rect x="594.24" y="63.68" width="1.2" height="1.2" fill="#8c8c80"/><rect x="609.86" y="63.68" width="1.2" height="1.2" fill="#8c8c80"/><rect x="625.48" y="63.68" width="1.2" height="1.2" fill="#8c8c80"/><rect x="656.72" y="63.68" width="1.2" height="1.2" fill="#8c8c80"/><rect x="672.34" y="63.68" width="1.2" height="1.2" fill="#8c8c80"/><rect x="687.96" y="63.68" width="1.2" height="1.2" fill="#8c8c80"/><rect x="703.58" y="63.68" width="1.2" height="1.2" fill="#8c8c80"/><rect x="734.82" y="63.68" width="1.2" height="1.2" fill="#8c8c80"/><rect x="750.44" y="63.68" width="1.2" height="1.2" fill="#8c8c80"/><rect x="766.06" y="63.68" width="1.2" height="1.2" fill="#8c8c80"/><rect x="781.68" y="63.68" width="1.2" height="1.2" fill="#8c8c80"/><rect x="31.92" y="114.46" width="1.2" height="1.2" fill="#8c8c80"/><rect x="47.54" y="114.46" width="1.2" height="1.2" fill="#8c8c80"/><rect x="63.16" y="114.46" width="1.2" height="1.2" fill="#8c8c80"/><rect x="78.78" y="114.46" width="1.2" height="1.2" fill="#8c8c80"/><rect x="110.02" y="114.46" width="1.2" height="1.2" fill="#8c8c80"/><rect x="125.64" y="114.46" width="1.2" height="1.2" fill="#8c8c80"/><rect x="141.26" y="114.46" width="1.2" height="1.2" fill="#8c8c80"/><rect x="156.88" y="114.46" width="1.2" height="1.2" fill="#8c8c80"/><rect x="188.12" y="114.46" width="1.2" height="1.2" fill="#8c8c80"/><rect x="203.74" y="114.46" width="1.2" height="1.2" fill="#8c8c80"/><rect x="219.36" y="114.46" width="1.2" height="1.2" fill="#8c8c80"/><rect x="234.98" y="114.46" width="1.2" height="1.2" fill="#8c8c80"/><rect x="266.22" y="114.46" width="1.2" height="1.2" fill="#8c8c80"/><rect x="281.84" y="114.46" width="1.2" height="1.2" fill="#8c8c80"/><rect x="297.46" y="114.46" width="1.2" height="1.2" fill="#8c8c80"/><rect x="313.08" y="114.46" width="1.2" height="1.2" fill="#8c8c80"/><rect x="344.32" y="114.46" width="1.2" height="1.2" fill="#8c8c80"/><rect x="359.94" y="114.46" width="1.2" height="1.2" fill="#8c8c80"/><rect x="375.56" y="114.46" width="1.2" height="1.2" fill="#8c8c80"/><rect x="391.18" y="114.46" width="1.2" height="1.2" fill="#8c8c80"/><rect x="422.42" y="114.46" width="1.2" height="1.2" fill="#8c8c80"/><rect x="438.04" y="114.46" width="1.2" height="1.2" fill="#8c8c80"/><rect x="453.66" y="114.46" width="1.2" height="1.2" fill="#8c8c80"/><rect x="469.28" y="114.46" width="1.2" height="1.2" fill="#8c8c80"/><rect x="500.52" y="114.46" width="1.2" height="1.2" fill="#8c8c80"/><rect x="516.14" y="114.46" width="1.2" height="1.2" fill="#8c8c80"/><rect x="531.76" y="114.46" width="1.2" height="1.2" fill="#8c8c80"/><rect x="547.38" y="114.46" width="1.2" height="1.2" fill="#8c8c80"/><rect x="578.62" y="114.46" width="1.2" height="1.2" fill="#8c8c80"/><rect x="594.24" y="114.46" width="1.2" height="1.2" fill="#8c8c80"/><rect x="609.86" y="114.46" width="1.2" height="1.2" fill="#8c8c80"/><rect x="625.48" y="114.46" width="1.2" height="1.2" fill="#8c8c80"/><rect x="656.72" y="114.46" width="1.2" height="1.2" fill="#8c8c80"/><rect x="672.34" y="114.46" width="1.2" height="1.2" fill="#8c8c80"/><rect x="687.96" y="114.46" width="1.2" height="1.2" fill="#8c8c80"/><rect x="703.58" y="114.46" width="1.2" height="1.2" fill="#8c8c80"/><rect x="734.82" y="114.46" width="1.2" height="1.2" fill="#8c8c80"/><rect x="750.44" y="114.46" width="1.2" height="1.2" fill="#8c8c80"/><rect x="766.06" y="114.46" width="1.2" height="1.2" fill="#8c8c80"/><rect x="781.68" y="114.46" width="1.2" height="1.2" fill="#8c8c80"/><rect x="31.92" y="165.24" width="1.2" height="1.2" fill="#8c8c80"/><rect x="47.54" y="165.24" width="1.2" height="1.2" fill="#8c8c80"/><rect x="63.16" y="165.24" width="1.2" height="1.2" fill="#8c8c80"/><rect x="78.78" y="165.24" width="1.2" height="1.2" fill="#8c8c80"/><rect x="110.02" y="165.24" width="1.2" height="1.2" fill="#8c8c80"/><rect x="125.64" y="165.24" width="1.2" height="1.2" fill="#8c8c80"/><rect x="141.26" y="165.24" width="1.2" height="1.2" fill="#8c8c80"/><rect x="156.88" y="165.24" width="1.2" height="1.2" fill="#8c8c80"/><rect x="188.12" y="165.24" width="1.2" height="1.2" fill="#8c8c80"/><rect x="203.74" y="165.24" width="1.2" height="1.2" fill="#8c8c80"/><rect x="219.36" y="165.24" width="1.2" height="1.2" fill="#8c8c80"/><rect x="234.98" y="165.24" width="1.2" height="1.2" fill="#8c8c80"/><rect x="266.22" y="165.24" width="1.2" height="1.2" fill="#8c8c80"/><rect x="281.84" y="165.24" width="1.2" height="1.2" fill="#8c8c80"/><rect x="297.46" y="165.24" width="1.2" height="1.2" fill="#8c8c80"/><rect x="313.08" y="165.24" width="1.2" height="1.2" fill="#8c8c80"/><rect x="344.32" y="165.24" width="1.2" height="1.2" fill="#8c8c80"/><rect x="359.94" y="165.24" width="1.2" height="1.2" fill="#8c8c80"/><rect x="375.56" y="165.24" width="1.2" height="1.2" fill="#8c8c80"/><rect x="391.18" y="165.24" width="1.2" height="1.2" fill="#8c8c80"/><rect x="422.42" y="165.24" width="1.2" height="1.2" fill="#8c8c80"/><rect x="438.04" y="165.24" width="1.2" height="1.2" fill="#8c8c80"/><rect x="453.66" y="165.24" width="1.2" height="1.2" fill="#8c8c80"/><rect x="469.28" y="165.24" width="1.2" height="1.2" fill="#8c8c80"/><rect x="500.52" y="165.24" width="1.2" height="1.2" fill="#8c8c80"/><rect x="516.14" y="165.24" width="1.2" height="1.2" fill="#8c8c80"/><rect x="531.76" y="165.24" width="1.2" height="1.2" fill="#8c8c80"/><rect x="547.38" y="165.24" width="1.2" height="1.2" fill="#8c8c80"/><rect x="578.62" y="165.24" width="1.2" height="1.2" fill="#8c8c80"/><rect x="594.24" y="165.24" width="1.2" height="1.2" fill="#8c8c80"/><rect x="609.86" y="165.24" width="1.2" height="1.2" fill="#8c8c80"/><rect x="625.48" y="165.24" width="1.2" height="1.2" fill="#8c8c80"/><rect x="656.72" y="165.24" width="1.2" height="1.2" fill="#8c8c80"/><rect x="672.34" y="165.24" width="1.2" height="1.2" fill="#8c8c80"/><rect x="687.96" y="165.24" width="1.2" height="1.2" fill="#8c8c80"/><rect x="703.58" y="165.24" width="1.2" height="1.2" fill="#8c8c80"/><rect x="734.82" y="165.24" width="1.2" height="1.2" fill="#8c8c80"/><rect x="750.44" y="165.24" width="1.2" height="1.2" fill="#8c8c80"/><rect x="766.06" y="165.24" width="1.2" height="1.2" fill="#8c8c80"/><rect x="781.68" y="165.24" width="1.2" height="1.2" fill="#8c8c80"/><rect x="31.92" y="216.02" width="1.2" height="1.2" fill="#8c8c80"/><rect x="47.54" y="216.02" width="1.2" height="1.2" fill="#8c8c80"/><rect x="63.16" y="216.02" width="1.2" height="1.2" fill="#8c8c80"/><rect x="78.78" y="216.02" width="1.2" height="1.2" fill="#8c8c80"/><rect x="110.02" y="216.02" width="1.2" height="1.2" fill="#8c8c80"/><rect x="125.64" y="216.02" width="1.2" height="1.2" fill="#8c8c80"/><rect x="141.26" y="216.02" width="1.2" height="1.2" fill="#8c8c80"/><rect x="156.88" y="216.02" width="1.2" height="1.2" fill="#8c8c80"/><rect x="188.12" y="216.02" width="1.2" height="1.2" fill="#8c8c80"/><rect x="203.74" y="216.02" width="1.2" height="1.2" fill="#8c8c80"/><rect x="219.36" y="216.02" width="1.2" height="1.2" fill="#8c8c80"/><rect x="234.98" y="216.02" width="1.2" height="1.2" fill="#8c8c80"/><rect x="266.22" y="216.02" width="1.2" height="1.2" fill="#8c8c80"/><rect x="281.84" y="216.02" width="1.2" height="1.2" fill="#8c8c80"/><rect x="297.46" y="216.02" width="1.2" height="1.2" fill="#8c8c80"/><rect x="313.08" y="216.02" width="1.2" height="1.2" fill="#8c8c80"/><rect x="344.32" y="216.02" width="1.2" height="1.2" fill="#8c8c80"/><rect x="359.94" y="216.02" width="1.2" height="1.2" fill="#8c8c80"/><rect x="375.56" y="216.02" width="1.2" height="1.2" fill="#8c8c80"/><rect x="391.18" y="216.02" width="1.2" height="1.2" fill="#8c8c80"/><rect x="422.42" y="216.02" width="1.2" height="1.2" fill="#8c8c80"/><rect x="438.04" y="216.02" width="1.2" height="1.2" fill="#8c8c80"/><rect x="453.66" y="216.02" width="1.2" height="1.2" fill="#8c8c80"/><rect x="469.28" y="216.02" width="1.2" height="1.2" fill="#8c8c80"/><rect x="500.52" y="216.02" width="1.2" height="1.2" fill="#8c8c80"/><rect x="516.14" y="216.02" width="1.2" height="1.2" fill="#8c8c80"/><rect x="531.76" y="216.02" width="1.2" height="1.2" fill="#8c8c80"/><rect x="547.38" y="216.02" width="1.2" height="1.2" fill="#8c8c80"/><rect x="578.62" y="216.02" width="1.2" height="1.2" fill="#8c8c80"/><rect x="594.24" y="216.02" width="1.2" height="1.2" fill="#8c8c80"/><rect x="609.86" y="216.02" width="1.2" height="1.2" fill="#8c8c80"/><rect x="625.48" y="216.02" width="1.2" height="1.2" fill="#8c8c80"/><rect x="656.72" y="216.02" width="1.2" height="1.2" fill="#8c8c80"/><rect x="672.34" y="216.02" width="1.2" height="1.2" fill="#8c8c80"/><rect x="687.96" y="216.02" width="1.2" height="1.2" fill="#8c8c80"/><rect x="703.58" y="216.02" width="1.2" height="1.2" fill="#8c8c80"/><rect x="734.82" y="216.02" width="1.2" height="1.2" fill="#8c8c80"/><rect x="750.44" y="216.02" width="1.2" height="1.2" fill="#8c8c80"/><rect x="766.06" y="216.02" width="1.2" height="1.2" fill="#8c8c80"/><rect x="781.68" y="216.02" width="1.2" height="1.2" fill="#8c8c80"/><rect x="31.92" y="317.58" width="1.2" height="1.2" fill="#8c8c80"/><rect x="47.54" y="317.58" width="1.2" height="1.2" fill="#8c8c80"/><rect x="63.16" y="317.58" width="1.2" height="1.2" fill="#8c8c80"/><rect x="78.78" y="317.58" width="1.2" height="1.2" fill="#8c8c80"/><rect x="110.02" y="317.58" width="1.2" height="1.2" fill="#8c8c80"/><rect x="125.64" y="317.58" width="1.2" height="1.2" fill="#8c8c80"/><rect x="141.26" y="317.58" width="1.2" height="1.2" fill="#8c8c80"/><rect x="156.88" y="317.58" width="1.2" height="1.2" fill="#8c8c80"/><rect x="188.12" y="317.58" width="1.2" height="1.2" fill="#8c8c80"/><rect x="203.74" y="317.58" width="1.2" height="1.2" fill="#8c8c80"/><rect x="219.36" y="317.58" width="1.2" height="1.2" fill="#8c8c80"/><rect x="234.98" y="317.58" width="1.2" height="1.2" fill="#8c8c80"/><rect x="266.22" y="317.58" width="1.2" height="1.2" fill="#8c8c80"/><rect x="281.84" y="317.58" width="1.2" height="1.2" fill="#8c8c80"/><rect x="297.46" y="317.58" width="1.2" height="1.2" fill="#8c8c80"/><rect x="313.08" y="317.58" width="1.2" height="1.2" fill="#8c8c80"/><rect x="344.32" y="317.58" width="1.2" height="1.2" fill="#8c8c80"/><rect x="359.94" y="317.58" width="1.2" height="1.2" fill="#8c8c80"/><rect x="375.56" y="317.58" width="1.2" height="1.2" fill="#8c8c80"/><rect x="391.18" y="317.58" width="1.2" height="1.2" fill="#8c8c80"/><rect x="422.42" y="317.58" width="1.2" height="1.2" fill="#8c8c80"/><rect x="438.04" y="317.58" width="1.2" height="1.2" fill="#8c8c80"/><rect x="453.66" y="317.58" width="1.2" height="1.2" fill="#8c8c80"/><rect x="469.28" y="317.58" width="1.2" height="1.2" fill="#8c8c80"/><rect x="500.52" y="317.58" width="1.2" height="1.2" fill="#8c8c80"/><rect x="516.14" y="317.58" width="1.2" height="1.2" fill="#8c8c80"/><rect x="531.76" y="317.58" width="1.2" height="1.2" fill="#8c8c80"/><rect x="547.38" y="317.58" width="1.2" height="1.2" fill="#8c8c80"/><rect x="578.62" y="317.58" width="1.2" height="1.2" fill="#8c8c80"/><rect x="594.24" y="317.58" width="1.2" height="1.2" fill="#8c8c80"/><rect x="609.86" y="317.58" width="1.2" height="1.2" fill="#8c8c80"/><rect x="625.48" y="317.58" width="1.2" height="1.2" fill="#8c8c80"/><rect x="656.72" y="317.58" width="1.2" height="1.2" fill="#8c8c80"/><rect x="672.34" y="317.58" width="1.2" height="1.2" fill="#8c8c80"/><rect x="687.96" y="317.58" width="1.2" height="1.2" fill="#8c8c80"/><rect x="703.58" y="317.58" width="1.2" height="1.2" fill="#8c8c80"/><rect x="734.82" y="317.58" width="1.2" height="1.2" fill="#8c8c80"/><rect x="750.44" y="317.58" width="1.2" height="1.2" fill="#8c8c80"/><rect x="766.06" y="317.58" width="1.2" height="1.2" fill="#8c8c80"/><rect x="781.68" y="317.58" width="1.2" height="1.2" fill="#8c8c80"/><rect x="31.92" y="368.36" width="1.2" height="1.2" fill="#8c8c80"/><rect x="47.54" y="368.36" width="1.2" height="1.2" fill="#8c8c80"/><rect x="63.16" y="368.36" width="1.2" height="1.2" fill="#8c8c80"/><rect x="78.78" y="368.36" width="1.2" height="1.2" fill="#8c8c80"/><rect x="110.02" y="368.36" width="1.2" height="1.2" fill="#8c8c80"/><rect x="125.64" y="368.36" width="1.2" height="1.2" fill="#8c8c80"/><rect x="141.26" y="368.36" width="1.2" height="1.2" fill="#8c8c80"/><rect x="156.88" y="368.36" width="1.2" height="1.2" fill="#8c8c80"/><rect x="188.12" y="368.36" width="1.2" height="1.2" fill="#8c8c80"/><rect x="203.74" y="368.36" width="1.2" height="1.2" fill="#8c8c80"/><rect x="219.36" y="368.36" width="1.2" height="1.2" fill="#8c8c80"/><rect x="234.98" y="368.36" width="1.2" height="1.2" fill="#8c8c80"/><rect x="266.22" y="368.36" width="1.2" height="1.2" fill="#8c8c80"/><rect x="281.84" y="368.36" width="1.2" height="1.2" fill="#8c8c80"/><rect x="297.46" y="368.36" width="1.2" height="1.2" fill="#8c8c80"/><rect x="313.08" y="368.36" width="1.2" height="1.2" fill="#8c8c80"/><rect x="344.32" y="368.36" width="1.2" height="1.2" fill="#8c8c80"/><rect x="359.94" y="368.36" width="1.2" height="1.2" fill="#8c8c80"/><rect x="375.56" y="368.36" width="1.2" height="1.2" fill="#8c8c80"/><rect x="391.18" y="368.36" width="1.2" height="1.2" fill="#8c8c80"/><rect x="422.42" y="368.36" width="1.2" height="1.2" fill="#8c8c80"/><rect x="438.04" y="368.36" width="1.2" height="1.2" fill="#8c8c80"/><rect x="453.66" y="368.36" width="1.2" height="1.2" fill="#8c8c80"/><rect x="469.28" y="368.36" width="1.2" height="1.2" fill="#8c8c80"/><rect x="500.52" y="368.36" width="1.2" height="1.2" fill="#8c8c80"/><rect x="516.14" y="368.36" width="1.2" height="1.2" fill="#8c8c80"/><rect x="531.76" y="368.36" width="1.2" height="1.2" fill="#8c8c80"/><rect x="547.38" y="368.36" width="1.2" height="1.2" fill="#8c8c80"/><rect x="578.62" y="368.36" width="1.2" height="1.2" fill="#8c8c80"/><rect x="594.24" y="368.36" width="1.2" height="1.2" fill="#8c8c80"/><rect x="609.86" y="368.36" width="1.2" height="1.2" fill="#8c8c80"/><rect x="625.48" y="368.36" width="1.2" height="1.2" fill="#8c8c80"/><rect x="656.72" y="368.36" width="1.2" height="1.2" fill="#8c8c80"/><rect x="672.34" y="368.36" width="1.2" height="1.2" fill="#8c8c80"/><rect x="687.96" y="368.36" width="1.2" height="1.2" fill="#8c8c80"/><rect x="703.58" y="368.36" width="1.2" height="1.2" fill="#8c8c80"/><rect x="734.82" y="368.36" width="1.2" height="1.2" fill="#8c8c80"/><rect x="750.44" y="368.36" width="1.2" height="1.2" fill="#8c8c80"/><rect x="766.06" y="368.36" width="1.2" height="1.2" fill="#8c8c80"/><rect x="781.68" y="368.36" width="1.2" height="1.2" fill="#8c8c80"/><rect x="31.92" y="419.14" width="1.2" height="1.2" fill="#8c8c80"/><rect x="47.54" y="419.14" width="1.2" height="1.2" fill="#8c8c80"/><rect x="63.16" y="419.14" width="1.2" height="1.2" fill="#8c8c80"/><rect x="78.78" y="419.14" width="1.2" height="1.2" fill="#8c8c80"/><rect x="110.02" y="419.14" width="1.2" height="1.2" fill="#8c8c80"/><rect x="125.64" y="419.14" width="1.2" height="1.2" fill="#8c8c80"/><rect x="141.26" y="419.14" width="1.2" height="1.2" fill="#8c8c80"/><rect x="156.88" y="419.14" width="1.2" height="1.2" fill="#8c8c80"/><rect x="188.12" y="419.14" width="1.2" height="1.2" fill="#8c8c80"/><rect x="203.74" y="419.14" width="1.2" height="1.2" fill="#8c8c80"/><rect x="219.36" y="419.14" width="1.2" height="1.2" fill="#8c8c80"/><rect x="234.98" y="419.14" width="1.2" height="1.2" fill="#8c8c80"/><rect x="266.22" y="419.14" width="1.2" height="1.2" fill="#8c8c80"/><rect x="281.84" y="419.14" width="1.2" height="1.2" fill="#8c8c80"/><rect x="297.46" y="419.14" width="1.2" height="1.2" fill="#8c8c80"/><rect x="313.08" y="419.14" width="1.2" height="1.2" fill="#8c8c80"/><rect x="344.32" y="419.14" width="1.2" height="1.2" fill="#8c8c80"/><rect x="359.94" y="419.14" width="1.2" height="1.2" fill="#8c8c80"/><rect x="375.56" y="419.14" width="1.2" height="1.2" fill="#8c8c80"/><rect x="391.18" y="419.14" width="1.2" height="1.2" fill="#8c8c80"/><rect x="422.42" y="419.14" width="1.2" height="1.2" fill="#8c8c80"/><rect x="438.04" y="419.14" width="1.2" height="1.2" fill="#8c8c80"/><rect x="453.66" y="419.14" width="1.2" height="1.2" fill="#8c8c80"/><rect x="469.28" y="419.14" width="1.2" height="1.2" fill="#8c8c80"/><rect x="500.52" y="419.14" width="1.2" height="1.2" fill="#8c8c80"/><rect x="516.14" y="419.14" width="1.2" height="1.2" fill="#8c8c80"/><rect x="531.76" y="419.14" width="1.2" height="1.2" fill="#8c8c80"/><rect x="547.38" y="419.14" width="1.2" height="1.2" fill="#8c8c80"/><rect x="578.62" y="419.14" width="1.2" height="1.2" fill="#8c8c80"/><rect x="594.24" y="419.14" width="1.2" height="1.2" fill="#8c8c80"/><rect x="609.86" y="419.14" width="1.2" height="1.2" fill="#8c8c80"/><rect x="625.48" y="419.14" width="1.2" height="1.2" fill="#8c8c80"/><rect x="656.72" y="419.14" width="1.2" height="1.2" fill="#8c8c80"/><rect x="672.34" y="419.14" width="1.2" height="1.2" fill="#8c8c80"/><rect x="687.96" y="419.14" width="1.2" height="1.2" fill="#8c8c80"/><rect x="703.58" y="419.14" width="1.2" height="1.2" fill="#8c8c80"/><rect x="734.82" y="419.14" width="1.2" height="1.2" fill="#8c8c80"/><rect x="750.44" y="419.14" width="1.2" height="1.2" fill="#8c8c80"/><rect x="766.06" y="419.14" width="1.2" height="1.2" fill="#8c8c80"/><rect x="781.68" y="419.14" width="1.2" height="1.2" fill="#8c8c80"/><rect x="31.92" y="469.92" width="1.2" height="1.2" fill="#8c8c80"/><rect x="47.54" y="469.92" width="1.2" height="1.2" fill="#8c8c80"/><rect x="63.16" y="469.92" width="1.2" height="1.2" fill="#8c8c80"/><rect x="78.78" y="469.92" width="1.2" height="1.2" fill="#8c8c80"/><rect x="110.02" y="469.92" width="1.2" height="1.2" fill="#8c8c80"/><rect x="125.64" y="469.92" width="1.2" height="1.2" fill="#8c8c80"/><rect x="141.26" y="469.92" width="1.2" height="1.2" fill="#8c8c80"/><rect x="156.88" y="469.92" width="1.2" height="1.2" fill="#8c8c80"/><rect x="188.12" y="469.92" width="1.2" height="1.2" fill="#8c8c80"/><rect x="203.74" y="469.92" width="1.2" height="1.2" fill="#8c8c80"/><rect x="219.36" y="469.92" width="1.2" height="1.2" fill="#8c8c80"/><rect x="234.98" y="469.92" width="1.2" height="1.2" fill="#8c8c80"/><rect x="266.22" y="469.92" width="1.2" height="1.2" fill="#8c8c80"/><rect x="281.84" y="469.92" width="1.2" height="1.2" fill="#8c8c80"/><rect x="297.46" y="469.92" width="1.2" height="1.2" fill="#8c8c80"/><rect x="313.08" y="469.92" width="1.2" height="1.2" fill="#8c8c80"/><rect x="344.32" y="469.92" width="1.2" height="1.2" fill="#8c8c80"/><rect x="359.94" y="469.92" width="1.2" height="1.2" fill="#8c8c80"/><rect x="375.56" y="469.92" width="1.2" height="1.2" fill="#8c8c80"/><rect x="391.18" y="469.92" width="1.2" height="1.2" fill="#8c8c80"/><rect x="422.42" y="469.92" width="1.2" height="1.2" fill="#8c8c80"/><rect x="438.04" y="469.92" width="1.2" height="1.2" fill="#8c8c80"/><rect x="453.66" y="469.92" width="1.2" height="1.2" fill="#8c8c80"/><rect x="469.28" y="469.92" width="1.2" height="1.2" fill="#8c8c80"/><rect x="500.52" y="469.92" width="1.2" height="1.2" fill="#8c8c80"/><rect x="516.14" y="469.92" width="1.2" height="1.2" fill="#8c8c80"/><rect x="531.76" y="469.92" width="1.2" height="1.2" fill="#8c8c80"/><rect x="547.38" y="469.92" width="1.2" height="1.2" fill="#8c8c80"/><rect x="578.62" y="469.92" width="1.2" height="1.2" fill="#8c8c80"/><rect x="594.24" y="469.92" width="1.2" height="1.2" fill="#8c8c80"/><rect x="609.86" y="469.92" width="1.2" height="1.2" fill="#8c8c80"/><rect x="625.48" y="469.92" width="1.2" height="1.2" fill="#8c8c80"/><rect x="656.72" y="469.92" width="1.2" height="1.2" fill="#8c8c80"/><rect x="672.34" y="469.92" width="1.2" height="1.2" fill="#8c8c80"/><rect x="687.96" y="469.92" width="1.2" height="1.2" fill="#8c8c80"/><rect x="703.58" y="469.92" width="1.2" height="1.2" fill="#8c8c80"/><rect x="734.82" y="469.92" width="1.2" height="1.2" fill="#8c8c80"/><rect x="750.44" y="469.92" width="1.2" height="1.2" fill="#8c8c80"/><rect x="766.06" y="469.92" width="1.2" height="1.2" fill="#8c8c80"/><rect x="781.68" y="469.92" width="1.2" height="1.2" fill="#8c8c80"/><rect x="17" y="266.9" width="780" height="1" fill="#4a4a3a"/><rect x="406.9" y="14" width="1" height="507" fill="#4a4a3a"/><rect x="32.02" y="264.90" width="1" height="5" fill="#8c8c80"/><rect x="404.40" y="23.16" width="6" height="1" fill="#8c8c80"/><rect x="47.64" y="264.90" width="1" height="5" fill="#8c8c80"/><rect x="404.40" y="33.31" width="6" height="1" fill="#8c8c80"/><rect x="63.26" y="264.90" width="1" height="5" fill="#8c8c80"/><rect x="404.40" y="43.47" width="6" height="1" fill="#8c8c80"/><rect x="78.88" y="264.90" width="1" height="5" fill="#8c8c80"/><rect x="404.40" y="53.62" width="6" height="1" fill="#8c8c80"/><rect x="94.50" y="264.90" width="1" height="5" fill="#8c8c80"/><rect x="404.40" y="63.78" width="6" height="1" fill="#8c8c80"/><rect x="406.65" y="63.53" width="1.5" height="1.5" fill="#9a9a88"/><rect x="110.12" y="264.90" width="1" height="5" fill="#8c8c80"/><rect x="404.40" y="73.94" width="6" height="1" fill="#8c8c80"/><rect x="125.74" y="264.90" width="1" height="5" fill="#8c8c80"/><rect x="404.40" y="84.09" width="6" height="1" fill="#8c8c80"/><rect x="141.36" y="264.90" width="1" height="5" fill="#8c8c80"/><rect x="404.40" y="94.25" width="6" height="1" fill="#8c8c80"/><rect x="156.98" y="264.90" width="1" height="5" fill="#8c8c80"/><rect x="404.40" y="104.40" width="6" height="1" fill="#8c8c80"/><rect x="172.60" y="264.90" width="1" height="5" fill="#8c8c80"/><rect x="404.40" y="114.56" width="6" height="1" fill="#8c8c80"/><rect x="406.65" y="114.31" width="1.5" height="1.5" fill="#9a9a88"/><rect x="188.22" y="264.90" width="1" height="5" fill="#8c8c80"/><rect x="404.40" y="124.72" width="6" height="1" fill="#8c8c80"/><rect x="203.84" y="264.90" width="1" height="5" fill="#8c8c80"/><rect x="404.40" y="134.87" width="6" height="1" fill="#8c8c80"/><rect x="219.46" y="264.90" width="1" height="5" fill="#8c8c80"/><rect x="404.40" y="145.03" width="6" height="1" fill="#8c8c80"/><rect x="235.08" y="264.90" width="1" height="5" fill="#8c8c80"/><rect x="404.40" y="155.18" width="6" height="1" fill="#8c8c80"/><rect x="250.70" y="264.90" width="1" height="5" fill="#8c8c80"/><rect x="404.40" y="165.34" width="6" height="1" fill="#8c8c80"/><rect x="406.65" y="165.09" width="1.5" height="1.5" fill="#9a9a88"/><rect x="266.32" y="264.90" width="1" height="5" fill="#8c8c80"/><rect x="404.40" y="175.50" width="6" height="1" fill="#8c8c80"/><rect x="281.94" y="264.90" width="1" height="5" fill="#8c8c80"/><rect x="404.40" y="185.65" width="6" height="1" fill="#8c8c80"/><rect x="297.56" y="264.90" width="1" height="5" fill="#8c8c80"/><rect x="404.40" y="195.81" width="6" height="1" fill="#8c8c80"/><rect x="313.18" y="264.90" width="1" height="5" fill="#8c8c80"/><rect x="404.40" y="205.96" width="6" height="1" fill="#8c8c80"/><rect x="328.80" y="264.90" width="1" height="5" fill="#8c8c80"/><rect x="404.40" y="216.12" width="6" height="1" fill="#8c8c80"/><rect x="406.65" y="215.87" width="1.5" height="1.5" fill="#9a9a88"/><rect x="344.42" y="264.90" width="1" height="5" fill="#8c8c80"/><rect x="404.40" y="226.28" width="6" height="1" fill="#8c8c80"/><rect x="360.04" y="264.90" width="1" height="5" fill="#8c8c80"/><rect x="404.40" y="236.43" width="6" height="1" fill="#8c8c80"/><rect x="375.66" y="264.90" width="1" height="5" fill="#8c8c80"/><rect x="404.40" y="246.59" width="6" height="1" fill="#8c8c80"/><rect x="391.28" y="264.90" width="1" height="5" fill="#8c8c80"/><rect x="404.40" y="256.74" width="6" height="1" fill="#8c8c80"/><rect x="406.90" y="264.90" width="1" height="5" fill="#8c8c80"/><rect x="404.40" y="266.90" width="6" height="1" fill="#8c8c80"/><rect x="406.65" y="266.65" width="1.5" height="1.5" fill="#9a9a88"/><rect x="422.52" y="264.90" width="1" height="5" fill="#8c8c80"/><rect x="404.40" y="277.06" width="6" height="1" fill="#8c8c80"/><rect x="438.14" y="264.90" width="1" height="5" fill="#8c8c80"/><rect x="404.40" y="287.21" width="6" height="1" fill="#8c8c80"/><rect x="453.76" y="264.90" width="1" height="5" fill="#8c8c80"/><rect x="404.40" y="297.37" width="6" height="1" fill="#8c8c80"/><rect x="469.38" y="264.90" width="1" height="5" fill="#8c8c80"/><rect x="404.40" y="307.52" width="6" height="1" fill="#8c8c80"/><rect x="485.00" y="264.90" width="1" height="5" fill="#8c8c80"/><rect x="404.40" y="317.68" width="6" height="1" fill="#8c8c80"/><rect x="406.65" y="317.43" width="1.5" height="1.5" fill="#9a9a88"/><rect x="500.62" y="264.90" width="1" height="5" fill="#8c8c80"/><rect x="404.40" y="327.84" width="6" height="1" fill="#8c8c80"/><rect x="516.24" y="264.90" width="1" height="5" fill="#8c8c80"/><rect x="404.40" y="337.99" width="6" height="1" fill="#8c8c80"/><rect x="531.86" y="264.90" width="1" height="5" fill="#8c8c80"/><rect x="404.40" y="348.15" width="6" height="1" fill="#8c8c80"/><rect x="547.48" y="264.90" width="1" height="5" fill="#8c8c80"/><rect x="404.40" y="358.30" width="6" height="1" fill="#8c8c80"/><rect x="563.10" y="264.90" width="1" height="5" fill="#8c8c80"/><rect x="404.40" y="368.46" width="6" height="1" fill="#8c8c80"/><rect x="406.65" y="368.21" width="1.5" height="1.5" fill="#9a9a88"/><rect x="578.72" y="264.90" width="1" height="5" fill="#8c8c80"/><rect x="404.40" y="378.62" width="6" height="1" fill="#8c8c80"/><rect x="594.34" y="264.90" width="1" height="5" fill="#8c8c80"/><rect x="404.40" y="388.77" width="6" height="1" fill="#8c8c80"/><rect x="609.96" y="264.90" width="1" height="5" fill="#8c8c80"/><rect x="404.40" y="398.93" width="6" height="1" fill="#8c8c80"/><rect x="625.58" y="264.90" width="1" height="5" fill="#8c8c80"/><rect x="404.40" y="409.08" width="6" height="1" fill="#8c8c80"/><rect x="641.20" y="264.90" width="1" height="5" fill="#8c8c80"/><rect x="404.40" y="419.24" width="6" height="1" fill="#8c8c80"/><rect x="406.65" y="418.99" width="1.5" height="1.5" fill="#9a9a88"/><rect x="656.82" y="264.90" width="1" height="5" fill="#8c8c80"/><rect x="404.40" y="429.40" width="6" height="1" fill="#8c8c80"/><rect x="672.44" y="264.90" width="1" height="5" fill="#8c8c80"/><rect x="404.40" y="439.55" width="6" height="1" fill="#8c8c80"/><rect x="688.06" y="264.90" width="1" height="5" fill="#8c8c80"/><rect x="404.40" y="449.71" width="6" height="1" fill="#8c8c80"/><rect x="703.68" y="264.90" width="1" height="5" fill="#8c8c80"/><rect x="404.40" y="459.86" width="6" height="1" fill="#8c8c80"/><rect x="719.30" y="264.90" width="1" height="5" fill="#8c8c80"/><rect x="404.40" y="470.02" width="6" height="1" fill="#8c8c80"/><rect x="406.65" y="469.77" width="1.5" height="1.5" fill="#9a9a88"/><rect x="734.92" y="264.90" width="1" height="5" fill="#8c8c80"/><rect x="404.40" y="480.18" width="6" height="1" fill="#8c8c80"/><rect x="750.54" y="264.90" width="1" height="5" fill="#8c8c80"/><rect x="404.40" y="490.33" width="6" height="1" fill="#8c8c80"/><rect x="766.16" y="264.90" width="1" height="5" fill="#8c8c80"/><rect x="404.40" y="500.49" width="6" height="1" fill="#8c8c80"/><rect x="781.78" y="264.90" width="1" height="5" fill="#8c8c80"/><rect x="404.40" y="510.64" width="6" height="1" fill="#8c8c80"/><rect x="32.02" y="13.75" width="1" height="2.5" fill="#6e6a58"/><rect x="32.02" y="518.75" width="1" height="2.5" fill="#6e6a58"/><rect x="16.75" y="23.16" width="2.5" height="1" fill="#6e6a58"/><rect x="795.25" y="23.16" width="2.5" height="1" fill="#6e6a58"/><rect x="47.64" y="13.75" width="1" height="2.5" fill="#6e6a58"/><rect x="47.64" y="518.75" width="1" height="2.5" fill="#6e6a58"/><rect x="16.75" y="33.31" width="2.5" height="1" fill="#6e6a58"/><rect x="795.25" y="33.31" width="2.5" height="1" fill="#6e6a58"/><rect x="63.26" y="13.75" width="1" height="2.5" fill="#6e6a58"/><rect x="63.26" y="518.75" width="1" height="2.5" fill="#6e6a58"/><rect x="16.75" y="43.47" width="2.5" height="1" fill="#6e6a58"/><rect x="795.25" y="43.47" width="2.5" height="1" fill="#6e6a58"/><rect x="78.88" y="13.75" width="1" height="2.5" fill="#6e6a58"/><rect x="78.88" y="518.75" width="1" height="2.5" fill="#6e6a58"/><rect x="16.75" y="53.62" width="2.5" height="1" fill="#6e6a58"/><rect x="795.25" y="53.62" width="2.5" height="1" fill="#6e6a58"/><rect x="94.50" y="13.75" width="1" height="2.5" fill="#6e6a58"/><rect x="94.50" y="518.75" width="1" height="2.5" fill="#6e6a58"/><rect x="16.75" y="63.78" width="2.5" height="1" fill="#6e6a58"/><rect x="795.25" y="63.78" width="2.5" height="1" fill="#6e6a58"/><rect x="110.12" y="13.75" width="1" height="2.5" fill="#6e6a58"/><rect x="110.12" y="518.75" width="1" height="2.5" fill="#6e6a58"/><rect x="16.75" y="73.94" width="2.5" height="1" fill="#6e6a58"/><rect x="795.25" y="73.94" width="2.5" height="1" fill="#6e6a58"/><rect x="125.74" y="13.75" width="1" height="2.5" fill="#6e6a58"/><rect x="125.74" y="518.75" width="1" height="2.5" fill="#6e6a58"/><rect x="16.75" y="84.09" width="2.5" height="1" fill="#6e6a58"/><rect x="795.25" y="84.09" width="2.5" height="1" fill="#6e6a58"/><rect x="141.36" y="13.75" width="1" height="2.5" fill="#6e6a58"/><rect x="141.36" y="518.75" width="1" height="2.5" fill="#6e6a58"/><rect x="16.75" y="94.25" width="2.5" height="1" fill="#6e6a58"/><rect x="795.25" y="94.25" width="2.5" height="1" fill="#6e6a58"/><rect x="156.98" y="13.75" width="1" height="2.5" fill="#6e6a58"/><rect x="156.98" y="518.75" width="1" height="2.5" fill="#6e6a58"/><rect x="16.75" y="104.40" width="2.5" height="1" fill="#6e6a58"/><rect x="795.25" y="104.40" width="2.5" height="1" fill="#6e6a58"/><rect x="172.60" y="13.75" width="1" height="2.5" fill="#6e6a58"/><rect x="172.60" y="518.75" width="1" height="2.5" fill="#6e6a58"/><rect x="16.75" y="114.56" width="2.5" height="1" fill="#6e6a58"/><rect x="795.25" y="114.56" width="2.5" height="1" fill="#6e6a58"/><rect x="188.22" y="13.75" width="1" height="2.5" fill="#6e6a58"/><rect x="188.22" y="518.75" width="1" height="2.5" fill="#6e6a58"/><rect x="16.75" y="124.72" width="2.5" height="1" fill="#6e6a58"/><rect x="795.25" y="124.72" width="2.5" height="1" fill="#6e6a58"/><rect x="203.84" y="13.75" width="1" height="2.5" fill="#6e6a58"/><rect x="203.84" y="518.75" width="1" height="2.5" fill="#6e6a58"/><rect x="16.75" y="134.87" width="2.5" height="1" fill="#6e6a58"/><rect x="795.25" y="134.87" width="2.5" height="1" fill="#6e6a58"/><rect x="219.46" y="13.75" width="1" height="2.5" fill="#6e6a58"/><rect x="219.46" y="518.75" width="1" height="2.5" fill="#6e6a58"/><rect x="16.75" y="145.03" width="2.5" height="1" fill="#6e6a58"/><rect x="795.25" y="145.03" width="2.5" height="1" fill="#6e6a58"/><rect x="235.08" y="13.75" width="1" height="2.5" fill="#6e6a58"/><rect x="235.08" y="518.75" width="1" height="2.5" fill="#6e6a58"/><rect x="16.75" y="155.18" width="2.5" height="1" fill="#6e6a58"/><rect x="795.25" y="155.18" width="2.5" height="1" fill="#6e6a58"/><rect x="250.70" y="13.75" width="1" height="2.5" fill="#6e6a58"/><rect x="250.70" y="518.75" width="1" height="2.5" fill="#6e6a58"/><rect x="16.75" y="165.34" width="2.5" height="1" fill="#6e6a58"/><rect x="795.25" y="165.34" width="2.5" height="1" fill="#6e6a58"/><rect x="266.32" y="13.75" width="1" height="2.5" fill="#6e6a58"/><rect x="266.32" y="518.75" width="1" height="2.5" fill="#6e6a58"/><rect x="16.75" y="175.50" width="2.5" height="1" fill="#6e6a58"/><rect x="795.25" y="175.50" width="2.5" height="1" fill="#6e6a58"/><rect x="281.94" y="13.75" width="1" height="2.5" fill="#6e6a58"/><rect x="281.94" y="518.75" width="1" height="2.5" fill="#6e6a58"/><rect x="16.75" y="185.65" width="2.5" height="1" fill="#6e6a58"/><rect x="795.25" y="185.65" width="2.5" height="1" fill="#6e6a58"/><rect x="297.56" y="13.75" width="1" height="2.5" fill="#6e6a58"/><rect x="297.56" y="518.75" width="1" height="2.5" fill="#6e6a58"/><rect x="16.75" y="195.81" width="2.5" height="1" fill="#6e6a58"/><rect x="795.25" y="195.81" width="2.5" height="1" fill="#6e6a58"/><rect x="313.18" y="13.75" width="1" height="2.5" fill="#6e6a58"/><rect x="313.18" y="518.75" width="1" height="2.5" fill="#6e6a58"/><rect x="16.75" y="205.96" width="2.5" height="1" fill="#6e6a58"/><rect x="795.25" y="205.96" width="2.5" height="1" fill="#6e6a58"/><rect x="328.80" y="13.75" width="1" height="2.5" fill="#6e6a58"/><rect x="328.80" y="518.75" width="1" height="2.5" fill="#6e6a58"/><rect x="16.75" y="216.12" width="2.5" height="1" fill="#6e6a58"/><rect x="795.25" y="216.12" width="2.5" height="1" fill="#6e6a58"/><rect x="344.42" y="13.75" width="1" height="2.5" fill="#6e6a58"/><rect x="344.42" y="518.75" width="1" height="2.5" fill="#6e6a58"/><rect x="16.75" y="226.28" width="2.5" height="1" fill="#6e6a58"/><rect x="795.25" y="226.28" width="2.5" height="1" fill="#6e6a58"/><rect x="360.04" y="13.75" width="1" height="2.5" fill="#6e6a58"/><rect x="360.04" y="518.75" width="1" height="2.5" fill="#6e6a58"/><rect x="16.75" y="236.43" width="2.5" height="1" fill="#6e6a58"/><rect x="795.25" y="236.43" width="2.5" height="1" fill="#6e6a58"/><rect x="375.66" y="13.75" width="1" height="2.5" fill="#6e6a58"/><rect x="375.66" y="518.75" width="1" height="2.5" fill="#6e6a58"/><rect x="16.75" y="246.59" width="2.5" height="1" fill="#6e6a58"/><rect x="795.25" y="246.59" width="2.5" height="1" fill="#6e6a58"/><rect x="391.28" y="13.75" width="1" height="2.5" fill="#6e6a58"/><rect x="391.28" y="518.75" width="1" height="2.5" fill="#6e6a58"/><rect x="16.75" y="256.74" width="2.5" height="1" fill="#6e6a58"/><rect x="795.25" y="256.74" width="2.5" height="1" fill="#6e6a58"/><rect x="406.90" y="13.75" width="1" height="2.5" fill="#6e6a58"/><rect x="406.90" y="518.75" width="1" height="2.5" fill="#6e6a58"/><rect x="16.75" y="266.90" width="2.5" height="1" fill="#6e6a58"/><rect x="795.25" y="266.90" width="2.5" height="1" fill="#6e6a58"/><rect x="422.52" y="13.75" width="1" height="2.5" fill="#6e6a58"/><rect x="422.52" y="518.75" width="1" height="2.5" fill="#6e6a58"/><rect x="16.75" y="277.06" width="2.5" height="1" fill="#6e6a58"/><rect x="795.25" y="277.06" width="2.5" height="1" fill="#6e6a58"/><rect x="438.14" y="13.75" width="1" height="2.5" fill="#6e6a58"/><rect x="438.14" y="518.75" width="1" height="2.5" fill="#6e6a58"/><rect x="16.75" y="287.21" width="2.5" height="1" fill="#6e6a58"/><rect x="795.25" y="287.21" width="2.5" height="1" fill="#6e6a58"/><rect x="453.76" y="13.75" width="1" height="2.5" fill="#6e6a58"/><rect x="453.76" y="518.75" width="1" height="2.5" fill="#6e6a58"/><rect x="16.75" y="297.37" width="2.5" height="1" fill="#6e6a58"/><rect x="795.25" y="297.37" width="2.5" height="1" fill="#6e6a58"/><rect x="469.38" y="13.75" width="1" height="2.5" fill="#6e6a58"/><rect x="469.38" y="518.75" width="1" height="2.5" fill="#6e6a58"/><rect x="16.75" y="307.52" width="2.5" height="1" fill="#6e6a58"/><rect x="795.25" y="307.52" width="2.5" height="1" fill="#6e6a58"/><rect x="485.00" y="13.75" width="1" height="2.5" fill="#6e6a58"/><rect x="485.00" y="518.75" width="1" height="2.5" fill="#6e6a58"/><rect x="16.75" y="317.68" width="2.5" height="1" fill="#6e6a58"/><rect x="795.25" y="317.68" width="2.5" height="1" fill="#6e6a58"/><rect x="500.62" y="13.75" width="1" height="2.5" fill="#6e6a58"/><rect x="500.62" y="518.75" width="1" height="2.5" fill="#6e6a58"/><rect x="16.75" y="327.84" width="2.5" height="1" fill="#6e6a58"/><rect x="795.25" y="327.84" width="2.5" height="1" fill="#6e6a58"/><rect x="516.24" y="13.75" width="1" height="2.5" fill="#6e6a58"/><rect x="516.24" y="518.75" width="1" height="2.5" fill="#6e6a58"/><rect x="16.75" y="337.99" width="2.5" height="1" fill="#6e6a58"/><rect x="795.25" y="337.99" width="2.5" height="1" fill="#6e6a58"/><rect x="531.86" y="13.75" width="1" height="2.5" fill="#6e6a58"/><rect x="531.86" y="518.75" width="1" height="2.5" fill="#6e6a58"/><rect x="16.75" y="348.15" width="2.5" height="1" fill="#6e6a58"/><rect x="795.25" y="348.15" width="2.5" height="1" fill="#6e6a58"/><rect x="547.48" y="13.75" width="1" height="2.5" fill="#6e6a58"/><rect x="547.48" y="518.75" width="1" height="2.5" fill="#6e6a58"/><rect x="16.75" y="358.30" width="2.5" height="1" fill="#6e6a58"/><rect x="795.25" y="358.30" width="2.5" height="1" fill="#6e6a58"/><rect x="563.10" y="13.75" width="1" height="2.5" fill="#6e6a58"/><rect x="563.10" y="518.75" width="1" height="2.5" fill="#6e6a58"/><rect x="16.75" y="368.46" width="2.5" height="1" fill="#6e6a58"/><rect x="795.25" y="368.46" width="2.5" height="1" fill="#6e6a58"/><rect x="578.72" y="13.75" width="1" height="2.5" fill="#6e6a58"/><rect x="578.72" y="518.75" width="1" height="2.5" fill="#6e6a58"/><rect x="16.75" y="378.62" width="2.5" height="1" fill="#6e6a58"/><rect x="795.25" y="378.62" width="2.5" height="1" fill="#6e6a58"/><rect x="594.34" y="13.75" width="1" height="2.5" fill="#6e6a58"/><rect x="594.34" y="518.75" width="1" height="2.5" fill="#6e6a58"/><rect x="16.75" y="388.77" width="2.5" height="1" fill="#6e6a58"/><rect x="795.25" y="388.77" width="2.5" height="1" fill="#6e6a58"/><rect x="609.96" y="13.75" width="1" height="2.5" fill="#6e6a58"/><rect x="609.96" y="518.75" width="1" height="2.5" fill="#6e6a58"/><rect x="16.75" y="398.93" width="2.5" height="1" fill="#6e6a58"/><rect x="795.25" y="398.93" width="2.5" height="1" fill="#6e6a58"/><rect x="625.58" y="13.75" width="1" height="2.5" fill="#6e6a58"/><rect x="625.58" y="518.75" width="1" height="2.5" fill="#6e6a58"/><rect x="16.75" y="409.08" width="2.5" height="1" fill="#6e6a58"/><rect x="795.25" y="409.08" width="2.5" height="1" fill="#6e6a58"/><rect x="641.20" y="13.75" width="1" height="2.5" fill="#6e6a58"/><rect x="641.20" y="518.75" width="1" height="2.5" fill="#6e6a58"/><rect x="16.75" y="419.24" width="2.5" height="1" fill="#6e6a58"/><rect x="795.25" y="419.24" width="2.5" height="1" fill="#6e6a58"/><rect x="656.82" y="13.75" width="1" height="2.5" fill="#6e6a58"/><rect x="656.82" y="518.75" width="1" height="2.5" fill="#6e6a58"/><rect x="16.75" y="429.40" width="2.5" height="1" fill="#6e6a58"/><rect x="795.25" y="429.40" width="2.5" height="1" fill="#6e6a58"/><rect x="672.44" y="13.75" width="1" height="2.5" fill="#6e6a58"/><rect x="672.44" y="518.75" width="1" height="2.5" fill="#6e6a58"/><rect x="16.75" y="439.55" width="2.5" height="1" fill="#6e6a58"/><rect x="795.25" y="439.55" width="2.5" height="1" fill="#6e6a58"/><rect x="688.06" y="13.75" width="1" height="2.5" fill="#6e6a58"/><rect x="688.06" y="518.75" width="1" height="2.5" fill="#6e6a58"/><rect x="16.75" y="449.71" width="2.5" height="1" fill="#6e6a58"/><rect x="795.25" y="449.71" width="2.5" height="1" fill="#6e6a58"/><rect x="703.68" y="13.75" width="1" height="2.5" fill="#6e6a58"/><rect x="703.68" y="518.75" width="1" height="2.5" fill="#6e6a58"/><rect x="16.75" y="459.86" width="2.5" height="1" fill="#6e6a58"/><rect x="795.25" y="459.86" width="2.5" height="1" fill="#6e6a58"/><rect x="719.30" y="13.75" width="1" height="2.5" fill="#6e6a58"/><rect x="719.30" y="518.75" width="1" height="2.5" fill="#6e6a58"/><rect x="16.75" y="470.02" width="2.5" height="1" fill="#6e6a58"/><rect x="795.25" y="470.02" width="2.5" height="1" fill="#6e6a58"/><rect x="734.92" y="13.75" width="1" height="2.5" fill="#6e6a58"/><rect x="734.92" y="518.75" width="1" height="2.5" fill="#6e6a58"/><rect x="16.75" y="480.18" width="2.5" height="1" fill="#6e6a58"/><rect x="795.25" y="480.18" width="2.5" height="1" fill="#6e6a58"/><rect x="750.54" y="13.75" width="1" height="2.5" fill="#6e6a58"/><rect x="750.54" y="518.75" width="1" height="2.5" fill="#6e6a58"/><rect x="16.75" y="490.33" width="2.5" height="1" fill="#6e6a58"/><rect x="795.25" y="490.33" width="2.5" height="1" fill="#6e6a58"/><rect x="766.16" y="13.75" width="1" height="2.5" fill="#6e6a58"/><rect x="766.16" y="518.75" width="1" height="2.5" fill="#6e6a58"/><rect x="16.75" y="500.49" width="2.5" height="1" fill="#6e6a58"/><rect x="795.25" y="500.49" width="2.5" height="1" fill="#6e6a58"/><rect x="781.78" y="13.75" width="1" height="2.5" fill="#6e6a58"/><rect x="781.78" y="518.75" width="1" height="2.5" fill="#6e6a58"/><rect x="16.75" y="510.64" width="2.5" height="1" fill="#6e6a58"/><rect x="795.25" y="510.64" width="2.5" height="1" fill="#6e6a58"/><polyline points="16.5,161.28 18.0,161.41 19.5,160.83 22.0,160.87 24.5,160.80 27.0,161.09 28.5,161.48 30.0,161.13 32.5,161.46 35.0,160.92 36.5,161.84 39.0,162.41 41.5,161.75 43.0,162.46 44.5,161.70 46.0,161.22 47.5,161.67 50.0,161.26 52.5,161.03 55.0,161.73 56.5,161.37 59.0,161.98 61.5,160.81 63.0,161.59 64.5,161.60" fill="none" stroke="#e8e800" stroke-width="2.6" stroke-linejoin="round"/><path d="M18.5 161.6V164.2M20.5 161.6V164.4M22.5 161.6V164.2M26.5 161.6V164.6M27.5 159.1V161.6M29.5 159.0V161.6M30.5 158.8V161.6M34.5 161.6V164.3M42.5 158.8V161.6M46.5 161.6V164.0M48.5 159.0V161.6M49.5 159.5V161.6M50.5 158.7V161.6M51.5 159.3V161.6M54.5 159.1V161.6M59.5 161.6V164.0M63.5 159.4V161.6" stroke="#e8e800" stroke-width="1" opacity="0.85"/><polyline points="64.5,66.12 66.0,65.72 68.5,66.03 70.5,65.71 72.5,66.66 75.0,66.72 76.5,66.94 79.0,67.41 81.5,66.92 83.0,66.52 85.5,67.14 87.5,66.42 89.5,65.89 92.0,66.42 93.5,65.82 93.6,66.60" fill="none" stroke="#e8e800" stroke-width="2.6" stroke-linejoin="round"/><path d="M66.5 63.9V66.6M67.5 63.9V66.6M71.5 64.4V66.6M77.5 64.0V66.6M80.5 66.6V68.7M86.5 66.6V69.6M91.5 66.6V69.2M92.5 63.6V66.6" stroke="#e8e800" stroke-width="1" opacity="0.85"/><polyline points="93.6,161.63 95.1,161.34 96.6,161.66 99.1,161.29 100.6,161.80 102.1,162.15 104.1,162.03 105.6,161.06 107.6,161.34 109.1,162.48 111.1,161.55 112.6,161.95 114.6,161.51 117.1,162.48 119.1,160.84 120.6,161.11 122.1,161.31 124.1,161.82 126.6,162.21 128.6,162.34 130.6,162.14 132.1,162.20 133.6,162.34 136.1,162.05 138.1,162.30 140.1,162.12 142.1,160.86 144.6,161.41 146.6,162.04 148.1,162.00 149.6,162.49 151.1,160.97 153.1,162.15 154.6,161.80 157.1,162.46 159.6,162.39 161.1,161.69 162.6,160.74 165.1,161.87 167.6,162.05 169.1,161.48 170.6,162.19 172.1,160.75 173.6,161.23 175.1,162.07 177.1,161.17 179.1,162.20 180.0,161.60" fill="none" stroke="#e8e800" stroke-width="2.6" stroke-linejoin="round"/><path d="M104.5 159.1V161.6M105.5 161.6V163.6M107.5 159.0V161.6M114.5 158.9V161.6M115.5 161.6V163.9M133.5 161.6V164.2M136.5 159.5V161.6M138.5 159.3V161.6M139.5 158.8V161.6M142.5 158.7V161.6M144.5 158.5V161.6M146.5 161.6V164.6M151.5 159.1V161.6M154.5 161.6V163.9M156.5 158.9V161.6M158.5 159.2V161.6M161.5 158.4V161.6M164.5 159.3V161.6M165.5 158.7V161.6M166.5 161.6V163.7M170.5 161.6V163.7M174.5 159.5V161.6M177.5 158.5V161.6" stroke="#e8e800" stroke-width="1" opacity="0.85"/><polyline points="180.0,67.14 181.5,66.79 183.0,65.82 184.5,66.52 186.5,67.49 188.5,67.37 190.5,66.82 192.0,66.65 193.5,67.39 195.0,66.17 196.5,66.06 198.5,66.83 201.0,67.07 203.0,66.50 205.5,66.02 207.5,67.15 208.7,66.60" fill="none" stroke="#e8e800" stroke-width="2.6" stroke-linejoin="round"/><path d="M181.5 64.6V66.6M185.5 66.6V69.0M192.5 66.6V68.8M193.5 66.6V68.8M196.5 63.4V66.6M199.5 63.8V66.6M202.5 63.8V66.6" stroke="#e8e800" stroke-width="1" opacity="0.85"/><polyline points="208.7,160.78 210.2,160.98 212.2,160.71 214.2,162.43 216.7,161.28 218.2,162.44 220.2,161.09 221.7,160.70 223.7,160.85 225.7,161.60 227.2,161.15 228.7,160.86 230.2,160.96 232.7,160.78 234.2,161.24 236.7,161.12 239.2,162.42 240.7,161.88 243.2,162.11 245.7,161.40 247.7,162.00 249.7,160.97 252.2,161.81 253.7,160.78 256.2,162.31 258.7,161.47 261.2,162.16 262.7,162.34 265.2,161.72 266.7,162.19 269.2,162.14 271.7,161.93 274.2,161.86 275.7,160.76 277.2,161.85 278.7,161.38 280.7,161.71 283.2,160.73 285.7,161.93 287.7,161.17 289.7,162.14 292.2,162.38 294.5,161.60" fill="none" stroke="#e8e800" stroke-width="2.6" stroke-linejoin="round"/><path d="M209.5 159.0V161.6M214.5 161.6V164.4M215.5 161.6V164.2M218.5 158.5V161.6M219.5 161.6V163.6M221.5 161.6V164.2M226.5 159.0V161.6M229.5 159.3V161.6M232.5 161.6V164.1M236.5 161.6V163.7M238.5 161.6V163.7M245.5 159.5V161.6M247.5 161.6V164.0M250.5 161.6V163.7M255.5 158.5V161.6M261.5 159.2V161.6M266.5 161.6V163.6M268.5 161.6V163.7M271.5 158.5V161.6M274.5 161.6V163.7M277.5 158.4V161.6M279.5 161.6V164.4M282.5 158.7V161.6M286.5 161.6V163.7M290.5 158.6V161.6" stroke="#e8e800" stroke-width="1" opacity="0.85"/><polyline points="294.5,66.01 296.5,66.32 298.5,66.16 301.0,67.46 303.0,66.43 304.5,66.24 307.0,66.90 308.5,66.00 310.0,65.84 312.5,67.33 314.5,66.69 316.5,67.33 318.5,66.47 321.0,66.05 322.5,66.01 323.7,66.60" fill="none" stroke="#e8e800" stroke-width="2.6" stroke-linejoin="round"/><path d="M295.5 64.3V66.6M296.5 66.6V69.2M304.5 64.3V66.6M306.5 64.0V66.6M309.5 66.6V68.9M310.5 66.6V69.0M315.5 64.6V66.6M320.5 64.1V66.6" stroke="#e8e800" stroke-width="1" opacity="0.85"/><polyline points="323.7,162.24 325.7,161.15 327.2,161.10 328.7,161.64 331.2,160.90 333.7,161.96 335.7,160.85 337.2,160.70 338.7,161.12 340.2,161.86 342.2,162.43 344.7,161.15 347.2,161.49 348.7,160.88 350.7,161.64 353.2,161.05 355.2,161.10 357.7,160.70 360.2,161.24 362.2,161.20 364.2,161.86 365.7,161.56 367.2,161.68 368.7,162.43 371.2,161.87 372.7,160.74 374.7,162.29 377.2,161.46 379.2,161.11 381.2,162.37 382.7,161.59 385.2,161.31 387.2,161.35 389.2,161.06 391.2,162.03 393.7,160.82 395.7,162.45 397.7,162.08 399.2,161.12 400.7,161.18 402.7,160.90 405.2,161.59 406.7,162.31 408.7,161.45 409.5,161.60" fill="none" stroke="#e8e800" stroke-width="2.6" stroke-linejoin="round"/><path d="M324.5 158.9V161.6M326.5 159.6V161.6M330.5 161.6V164.0M332.5 161.6V163.7M333.5 159.4V161.6M334.5 161.6V164.3M337.5 161.6V164.3M341.5 159.5V161.6M342.5 159.1V161.6M348.5 161.6V164.4M349.5 158.8V161.6M350.5 161.6V164.1M356.5 161.6V164.2M361.5 159.4V161.6M362.5 158.9V161.6M366.5 158.7V161.6M369.5 161.6V164.3M373.5 158.6V161.6M374.5 158.7V161.6M380.5 159.0V161.6M381.5 158.5V161.6M382.5 161.6V164.3M383.5 159.3V161.6M390.5 159.1V161.6M394.5 159.1V161.6M395.5 159.5V161.6M397.5 161.6V164.0M400.5 159.4V161.6M403.5 161.6V164.1M407.5 161.6V163.9M408.5 161.6V163.9" stroke="#e8e800" stroke-width="1" opacity="0.85"/><polyline points="409.5,66.17 411.5,66.15 413.0,66.12 415.0,67.29 417.5,66.04 419.0,66.41 420.5,66.61 422.0,66.87 423.5,66.88 425.0,65.88 427.0,67.29 428.5,67.21 430.5,65.77 432.5,66.12 434.0,66.04 436.5,66.05 438.0,66.37 438.3,66.60" fill="none" stroke="#e8e800" stroke-width="2.6" stroke-linejoin="round"/><path d="M411.5 66.6V69.4M413.5 63.9V66.6M415.5 66.6V69.0M416.5 64.4V66.6M417.5 66.6V69.2M419.5 66.6V68.6M422.5 66.6V68.9M423.5 66.6V69.4M425.5 64.5V66.6M429.5 64.4V66.6M432.5 66.6V68.9M434.5 66.6V69.2" stroke="#e8e800" stroke-width="1" opacity="0.85"/><polyline points="438.3,162.49 440.3,161.86 442.3,162.01 443.8,162.40 445.8,162.32 447.8,160.90 449.3,161.43 451.3,161.53 452.8,160.93 454.3,161.69 456.8,162.15 458.8,160.86 461.3,162.37 463.8,161.61 465.3,161.33 466.8,161.64 468.3,160.90 470.3,162.06 471.8,161.24 473.3,162.46 475.3,161.27 477.8,162.37 479.8,160.86 482.3,161.82 483.8,161.85 485.3,161.82 487.8,162.22 489.8,161.03 491.3,160.78 493.8,160.98 495.8,160.92 497.3,162.45 498.8,160.77 501.3,162.22 503.8,160.77 505.8,160.91 508.3,161.52 510.8,162.10 513.3,161.46 515.8,161.15 517.8,161.89 519.8,161.61 521.3,160.74 523.8,162.48 525.0,161.60" fill="none" stroke="#e8e800" stroke-width="2.6" stroke-linejoin="round"/><path d="M439.5 161.6V164.4M442.5 159.0V161.6M443.5 159.4V161.6M445.5 159.1V161.6M447.5 158.8V161.6M448.5 158.7V161.6M451.5 159.0V161.6M454.5 158.6V161.6M458.5 161.6V164.6M462.5 158.7V161.6M464.5 159.2V161.6M466.5 158.5V161.6M467.5 161.6V164.4M468.5 159.0V161.6M470.5 161.6V163.9M472.5 161.6V163.6M473.5 161.6V163.8M477.5 158.7V161.6M478.5 159.0V161.6M485.5 158.4V161.6M489.5 161.6V164.6M494.5 158.7V161.6M495.5 158.6V161.6M496.5 161.6V164.2M500.5 161.6V163.6M501.5 159.4V161.6M506.5 159.3V161.6M508.5 159.6V161.6M510.5 159.2V161.6M511.5 161.6V164.2M513.5 161.6V164.2M515.5 158.5V161.6M516.5 161.6V163.7M517.5 158.8V161.6M521.5 161.6V163.6" stroke="#e8e800" stroke-width="1" opacity="0.85"/><polyline points="525.0,66.33 527.5,66.74 530.0,67.39 532.5,66.59 534.0,67.33 535.5,65.81 537.0,66.43 538.5,65.99 540.0,65.72 542.5,66.88 544.0,65.96 545.5,66.63 548.0,66.61 550.5,66.45 553.0,66.01 554.3,66.60" fill="none" stroke="#e8e800" stroke-width="2.6" stroke-linejoin="round"/><path d="M526.5 63.8V66.6M534.5 63.8V66.6M535.5 63.4V66.6M536.5 66.6V69.2M537.5 63.5V66.6M540.5 66.6V68.7M546.5 66.6V69.5M548.5 64.0V66.6M549.5 63.5V66.6M551.5 66.6V68.8M553.5 66.6V69.0" stroke="#e8e800" stroke-width="1" opacity="0.85"/><polyline points="554.3,161.78 556.3,162.33 558.8,162.36 561.3,162.21 563.8,161.55 566.3,161.96 567.8,161.49 570.3,161.12 572.3,162.12 574.3,161.82 575.8,161.72 577.3,160.96 578.8,160.90 581.3,162.37 583.3,162.46 585.8,160.75 587.3,160.95 589.8,161.84 592.3,160.82 593.8,160.82 596.3,162.07 597.8,162.17 600.3,162.30 601.8,162.28 604.3,162.40 605.8,161.14 607.3,160.90 608.8,162.41 611.3,160.86 613.8,161.84 615.8,160.88 617.3,162.13 619.8,161.07 621.8,161.31 623.8,160.74 625.8,162.37 627.3,161.99 629.3,162.34 631.8,161.61 633.8,161.81 635.3,162.12 636.8,161.49 638.3,161.32 640.0,161.60" fill="none" stroke="#e8e800" stroke-width="2.6" stroke-linejoin="round"/><path d="M555.5 158.9V161.6M559.5 161.6V164.0M561.5 161.6V164.4M562.5 159.2V161.6M563.5 158.8V161.6M570.5 158.6V161.6M572.5 161.6V163.8M578.5 159.2V161.6M579.5 158.5V161.6M585.5 161.6V164.0M587.5 158.4V161.6M590.5 158.9V161.6M593.5 158.9V161.6M601.5 161.6V163.8M606.5 161.6V164.4M614.5 161.6V164.6M615.5 161.6V164.6M617.5 158.8V161.6M618.5 161.6V163.8M619.5 159.2V161.6M620.5 161.6V163.9M621.5 158.5V161.6M622.5 161.6V164.5M624.5 158.6V161.6M626.5 161.6V164.6M627.5 161.6V163.6M628.5 161.6V164.3M629.5 159.3V161.6" stroke="#e8e800" stroke-width="1" opacity="0.85"/><polyline points="640.0,66.75 641.5,66.92 644.0,65.92 646.0,66.26 648.5,66.96 650.5,66.14 652.5,66.98 655.0,65.98 657.0,66.57 658.5,66.82 660.5,66.63 663.0,67.37 664.5,67.31 666.5,67.10 668.5,67.20 669.3,66.60" fill="none" stroke="#e8e800" stroke-width="2.6" stroke-linejoin="round"/><path d="M641.5 63.9V66.6M642.5 63.7V66.6M645.5 63.9V66.6M654.5 66.6V69.3M657.5 63.4V66.6M659.5 64.3V66.6M661.5 64.1V66.6M665.5 66.6V68.8" stroke="#e8e800" stroke-width="1" opacity="0.85"/><polyline points="669.3,161.09 671.3,161.53 672.8,160.93 674.3,162.16 676.8,161.05 679.3,161.71 680.8,162.17 682.3,161.34 684.8,162.20 686.8,161.54 688.8,162.07 691.3,160.93 693.3,161.34 694.8,161.18 696.8,161.94 698.8,161.92 700.8,160.70 703.3,162.14 705.3,161.14 707.3,161.28 709.3,161.47 711.8,160.85 713.8,160.97 715.8,162.24 717.3,160.85 719.8,162.33 721.3,161.66 723.3,161.84 724.8,161.88 726.3,162.41 728.8,161.23 731.3,160.88 732.8,162.24 734.3,162.10 736.3,162.11 737.8,162.33 740.3,161.00 742.8,161.80 744.3,161.90 746.8,162.12 748.8,161.06 751.3,161.08 752.8,162.04 754.8,161.91 755.0,161.60" fill="none" stroke="#e8e800" stroke-width="2.6" stroke-linejoin="round"/><path d="M671.5 161.6V163.8M672.5 159.0V161.6M673.5 159.0V161.6M674.5 159.0V161.6M678.5 158.6V161.6M686.5 158.8V161.6M688.5 158.9V161.6M696.5 158.7V161.6M704.5 161.6V164.0M708.5 161.6V164.4M711.5 161.6V164.1M716.5 161.6V163.9M720.5 158.7V161.6M723.5 159.2V161.6M724.5 159.4V161.6M736.5 161.6V164.3M739.5 159.4V161.6M740.5 158.7V161.6M747.5 161.6V163.9M749.5 161.6V164.0M752.5 158.9V161.6M753.5 159.5V161.6" stroke="#e8e800" stroke-width="1" opacity="0.85"/><polyline points="755.0,67.16 757.5,66.95 759.5,66.50 761.0,66.92 763.5,66.77 766.0,67.47 768.0,67.09 770.5,65.88 773.0,66.55 774.5,66.83 776.5,65.71 779.0,66.90 780.5,66.09 782.0,65.93 783.5,66.20 784.3,66.60" fill="none" stroke="#e8e800" stroke-width="2.6" stroke-linejoin="round"/><path d="M756.5 66.6V69.3M757.5 66.6V68.7M762.5 63.8V66.6M766.5 66.6V69.6M768.5 64.6V66.6M771.5 64.2V66.6M773.5 63.6V66.6M775.5 64.2V66.6M779.5 63.6V66.6" stroke="#e8e800" stroke-width="1" opacity="0.85"/><polyline points="784.3,161.39 786.3,162.40 788.8,161.30 790.8,160.81 793.3,161.97 795.8,161.30 797.5,161.60" fill="none" stroke="#e8e800" stroke-width="2.6" stroke-linejoin="round"/><path d="M786.5 159.4V161.6M790.5 161.6V164.0M793.5 161.6V164.1M796.5 161.6V163.8" stroke="#e8e800" stroke-width="1" opacity="0.85"/><path d="M64.5 66.6V161.6M93.6 66.6V161.6M180.0 66.6V161.6M208.7 66.6V161.6M294.5 66.6V161.6M323.7 66.6V161.6M409.5 66.6V161.6M438.3 66.6V161.6M525.0 66.6V161.6M554.3 66.6V161.6M640.0 66.6V161.6M669.3 66.6V161.6M755.0 66.6V161.6M784.3 66.6V161.6" fill="none" stroke="#a0a000" stroke-width="1"/><polyline points="16.5,225.26 18.0,224.12 19.5,225.06 22.0,223.86 24.5,224.83 26.5,224.22 28.0,224.57 30.0,225.04 31.5,225.02 34.0,225.28 35.5,224.16 37.0,224.82 39.0,224.88 41.0,224.66 42.5,225.02 44.5,224.57 47.0,225.05 48.5,224.02 51.0,224.54 51.1,224.50" fill="none" stroke="#10d8d8" stroke-width="2.6" stroke-linejoin="round"/><path d="M21.5 224.5V226.7M22.5 224.5V227.2M27.5 222.4V224.5M30.5 221.7V224.5M32.5 221.8V224.5M35.5 222.5V224.5M40.5 224.5V227.3M46.5 224.5V226.5M47.5 224.5V226.7M48.5 222.4V224.5" stroke="#10d8d8" stroke-width="1" opacity="0.85"/><polyline points="51.1,319.42 52.6,320.15 55.1,319.32 56.6,319.87 58.1,319.06 60.6,319.02 62.1,320.32 64.6,319.51 66.1,319.41 67.6,319.27 69.1,320.39 70.6,318.91 72.6,320.29 74.1,320.22 75.6,320.11 77.1,319.06 79.6,319.88 80.0,319.50" fill="none" stroke="#10d8d8" stroke-width="2.6" stroke-linejoin="round"/><path d="M54.5 317.1V319.5M55.5 317.3V319.5M72.5 316.5V319.5M73.5 316.8V319.5" stroke="#10d8d8" stroke-width="1" opacity="0.85"/><polyline points="80.0,224.29 81.5,224.73 83.5,225.35 85.5,225.08 87.5,223.81 89.5,223.86 91.0,224.92 92.5,224.88 95.0,225.20 97.0,225.17 99.0,224.35 100.5,223.88 102.5,224.63 104.5,224.20 106.0,224.07 107.5,224.17 109.5,223.81 112.0,223.70 114.5,225.27 117.0,224.46 119.0,223.81 120.5,225.35 122.5,225.38 124.0,225.27 125.5,224.30 127.5,225.21 129.0,225.10 131.0,223.86 133.5,223.63 136.0,224.21 137.5,224.40 140.0,224.12 142.0,224.38 144.0,223.99 146.5,223.93 148.0,224.54 149.5,224.88 151.0,224.68 152.5,225.20 155.0,224.49 157.0,223.92 158.5,224.70 161.0,224.73 162.5,224.65 164.0,223.62 166.1,224.50" fill="none" stroke="#10d8d8" stroke-width="2.6" stroke-linejoin="round"/><path d="M84.5 221.5V224.5M89.5 221.4V224.5M92.5 224.5V226.7M95.5 222.1V224.5M97.5 221.9V224.5M100.5 221.6V224.5M107.5 221.5V224.5M113.5 221.3V224.5M114.5 224.5V226.7M115.5 222.2V224.5M117.5 222.4V224.5M119.5 224.5V226.5M124.5 221.5V224.5M126.5 222.4V224.5M129.5 224.5V226.6M131.5 221.8V224.5M133.5 221.8V224.5M135.5 221.5V224.5M145.5 224.5V226.8M152.5 221.9V224.5M155.5 224.5V226.9M159.5 222.0V224.5M161.5 222.3V224.5" stroke="#10d8d8" stroke-width="1" opacity="0.85"/><polyline points="166.1,320.06 167.6,318.66 170.1,319.72 172.6,319.72 175.1,319.58 176.6,319.72 178.6,318.82 180.1,319.38 181.6,319.12 183.6,319.23 185.1,318.82 187.6,320.33 190.1,320.22 191.6,319.44 194.1,320.28 194.9,319.50" fill="none" stroke="#10d8d8" stroke-width="2.6" stroke-linejoin="round"/><path d="M167.5 317.3V319.5M168.5 319.5V321.9M169.5 319.5V321.7M170.5 316.8V319.5M175.5 319.5V322.2M180.5 319.5V321.7M181.5 319.5V322.0M184.5 317.1V319.5M186.5 319.5V322.1M188.5 319.5V322.5M189.5 319.5V322.3M190.5 317.4V319.5M193.5 317.0V319.5" stroke="#10d8d8" stroke-width="1" opacity="0.85"/><polyline points="194.9,224.39 197.4,224.97 199.9,224.01 202.4,224.93 203.9,224.35 206.4,224.23 208.9,223.96 211.4,225.13 213.9,223.77 216.4,225.26 218.4,224.08 220.9,224.88 223.4,223.83 224.9,223.61 227.4,224.65 229.4,224.32 231.9,223.87 233.9,225.17 236.4,223.80 238.4,224.85 240.4,224.90 242.4,224.24 244.9,224.60 246.9,224.77 248.4,225.02 250.4,224.29 252.4,223.93 254.4,225.05 256.4,224.64 258.9,224.02 260.9,224.18 263.4,225.11 265.4,223.97 267.4,225.20 268.9,223.65 270.9,224.62 272.9,224.14 275.4,224.99 277.9,224.72 279.9,224.53 281.1,224.50" fill="none" stroke="#10d8d8" stroke-width="2.6" stroke-linejoin="round"/><path d="M198.5 221.7V224.5M200.5 222.4V224.5M201.5 224.5V226.9M205.5 222.3V224.5M213.5 222.1V224.5M215.5 222.1V224.5M216.5 221.7V224.5M217.5 224.5V226.8M224.5 224.5V227.4M226.5 221.8V224.5M227.5 221.8V224.5M231.5 222.5V224.5M236.5 222.5V224.5M237.5 222.3V224.5M243.5 222.3V224.5M245.5 221.9V224.5M247.5 222.4V224.5M256.5 222.2V224.5M257.5 224.5V226.5M261.5 222.3V224.5M263.5 222.2V224.5M266.5 222.4V224.5M267.5 224.5V226.7M268.5 221.8V224.5M269.5 222.5V224.5M273.5 224.5V227.4M275.5 221.7V224.5" stroke="#10d8d8" stroke-width="1" opacity="0.85"/><polyline points="281.1,318.64 282.6,318.76 284.1,319.25 285.6,318.61 287.6,319.31 289.6,318.81 292.1,320.17 294.1,319.33 295.6,320.33 297.6,320.09 299.6,319.60 301.6,318.94 303.6,319.22 305.6,318.66 308.1,318.65 309.6,319.04 309.8,319.50" fill="none" stroke="#10d8d8" stroke-width="2.6" stroke-linejoin="round"/><path d="M282.5 317.2V319.5M284.5 317.0V319.5M287.5 317.1V319.5M291.5 319.5V322.5M293.5 319.5V322.0M294.5 316.7V319.5M295.5 319.5V322.4M298.5 319.5V322.1M299.5 319.5V322.4M300.5 316.9V319.5M302.5 319.5V322.3M306.5 319.5V321.9M307.5 317.3V319.5" stroke="#10d8d8" stroke-width="1" opacity="0.85"/><polyline points="309.8,224.18 312.3,225.20 313.8,224.61 315.8,225.05 317.8,223.95 320.3,224.16 321.8,224.12 324.3,224.32 326.3,224.33 328.3,224.99 330.8,225.15 332.3,225.29 333.8,223.65 336.3,225.04 338.8,224.23 340.8,223.65 343.3,224.86 344.8,225.40 346.8,224.23 349.3,223.78 351.3,223.81 353.8,224.92 356.3,224.82 358.3,223.67 359.8,224.38 361.8,223.88 364.3,223.67 366.3,224.73 367.8,224.62 369.3,224.63 371.8,224.54 373.8,224.81 376.3,224.23 377.8,223.80 380.3,224.12 381.8,225.18 384.3,224.69 385.8,225.35 388.3,223.80 390.3,223.98 392.3,224.95 393.8,224.35 396.0,224.50" fill="none" stroke="#10d8d8" stroke-width="2.6" stroke-linejoin="round"/><path d="M313.5 224.5V226.6M322.5 221.7V224.5M326.5 221.6V224.5M327.5 221.7V224.5M329.5 224.5V227.0M333.5 224.5V226.6M336.5 224.5V226.8M337.5 221.7V224.5M339.5 224.5V226.7M344.5 224.5V227.4M345.5 221.8V224.5M350.5 221.7V224.5M355.5 222.2V224.5M357.5 224.5V226.6M358.5 224.5V226.7M361.5 222.1V224.5M364.5 222.4V224.5M365.5 221.3V224.5M367.5 221.6V224.5M370.5 221.9V224.5M372.5 224.5V227.0M373.5 221.4V224.5M378.5 224.5V226.7M379.5 222.5V224.5M382.5 224.5V226.7M386.5 221.6V224.5M390.5 224.5V227.3" stroke="#10d8d8" stroke-width="1" opacity="0.85"/><polyline points="396.0,320.10 397.5,318.70 399.0,319.62 401.5,320.26 404.0,319.33 405.5,320.30 407.5,319.36 410.0,318.88 412.0,319.68 414.5,318.74 417.0,319.01 418.5,319.40 420.5,318.76 422.0,320.13 424.0,318.94 425.2,319.50" fill="none" stroke="#10d8d8" stroke-width="2.6" stroke-linejoin="round"/><path d="M398.5 316.8V319.5M401.5 317.4V319.5M402.5 316.6V319.5M404.5 317.5V319.5M406.5 316.6V319.5M408.5 316.5V319.5M417.5 317.0V319.5M419.5 316.5V319.5" stroke="#10d8d8" stroke-width="1" opacity="0.85"/><polyline points="425.2,224.26 427.7,224.77 429.7,225.16 432.2,225.19 433.7,225.13 435.2,224.82 437.2,224.84 438.7,224.79 440.7,224.60 442.7,224.25 444.2,224.62 446.2,224.07 447.7,223.92 449.2,224.59 450.7,224.00 452.7,224.77 454.2,224.56 456.2,224.88 457.7,224.60 459.2,224.57 461.7,223.80 464.2,225.24 466.7,223.74 468.7,224.82 470.7,223.84 473.2,224.59 475.7,225.11 477.2,224.73 479.7,224.53 481.7,225.09 483.7,224.58 485.2,224.61 486.7,223.85 489.2,223.70 490.7,223.68 492.2,223.63 494.7,225.32 496.7,224.14 499.2,223.84 500.7,224.72 502.2,224.61 504.7,225.17 506.2,224.26 508.2,225.05 510.7,224.82 511.4,224.50" fill="none" stroke="#10d8d8" stroke-width="2.6" stroke-linejoin="round"/><path d="M426.5 222.1V224.5M430.5 221.8V224.5M431.5 221.8V224.5M433.5 221.4V224.5M435.5 224.5V226.7M439.5 222.5V224.5M440.5 221.5V224.5M441.5 224.5V227.1M442.5 224.5V227.2M444.5 221.4V224.5M449.5 222.1V224.5M450.5 221.9V224.5M453.5 222.3V224.5M458.5 221.5V224.5M462.5 222.1V224.5M463.5 224.5V227.4M465.5 222.3V224.5M471.5 221.8V224.5M473.5 221.9V224.5M475.5 222.3V224.5M477.5 224.5V226.8M479.5 224.5V227.1M483.5 221.8V224.5M490.5 224.5V227.3M494.5 224.5V227.3M501.5 222.1V224.5M506.5 224.5V226.7M508.5 222.5V224.5" stroke="#10d8d8" stroke-width="1" opacity="0.85"/><polyline points="511.4,319.40 513.9,319.99 515.4,319.66 516.9,319.14 518.9,319.05 521.4,319.59 523.4,318.73 524.9,319.65 526.4,319.65 528.4,319.64 530.4,319.24 532.9,319.37 534.4,320.11 536.4,320.22 538.4,320.22 540.2,319.50" fill="none" stroke="#10d8d8" stroke-width="2.6" stroke-linejoin="round"/><path d="M512.5 317.3V319.5M513.5 319.5V322.2M514.5 319.5V321.9M515.5 319.5V322.1M518.5 319.5V322.2M521.5 316.5V319.5M524.5 317.3V319.5M529.5 319.5V321.8M535.5 317.0V319.5M536.5 316.7V319.5" stroke="#10d8d8" stroke-width="1" opacity="0.85"/><polyline points="540.2,224.06 542.2,225.17 543.7,225.27 546.2,224.78 548.2,223.70 550.7,224.88 552.7,223.88 554.2,223.88 555.7,224.55 557.2,224.24 559.2,224.36 561.7,224.82 564.2,223.88 566.7,224.63 568.2,224.93 570.2,225.06 572.2,224.97 574.7,224.16 577.2,225.36 579.2,224.61 581.2,224.54 583.2,223.84 584.7,224.60 586.2,224.78 588.2,223.87 590.7,224.01 592.2,225.29 594.7,223.84 596.2,224.58 597.7,224.60 599.2,224.07 601.7,224.26 603.2,225.23 605.7,225.14 607.2,224.55 609.2,225.00 610.7,224.39 612.7,223.98 614.7,225.22 616.7,224.43 618.7,225.02 620.2,223.79 622.7,223.63 625.2,225.24 625.8,224.50" fill="none" stroke="#10d8d8" stroke-width="2.6" stroke-linejoin="round"/><path d="M542.5 221.8V224.5M547.5 224.5V226.8M548.5 224.5V226.9M549.5 224.5V226.7M552.5 224.5V227.5M553.5 224.5V227.1M554.5 221.5V224.5M556.5 224.5V227.3M558.5 224.5V226.8M561.5 221.7V224.5M566.5 224.5V227.4M570.5 224.5V227.4M572.5 224.5V226.5M573.5 221.3V224.5M574.5 221.4V224.5M575.5 221.6V224.5M576.5 222.3V224.5M578.5 222.1V224.5M583.5 222.2V224.5M586.5 221.9V224.5M587.5 224.5V226.9M588.5 222.5V224.5M590.5 224.5V227.4M591.5 221.9V224.5M592.5 222.0V224.5M593.5 221.7V224.5M594.5 221.6V224.5M596.5 222.1V224.5M600.5 224.5V227.5M603.5 224.5V226.7M604.5 224.5V226.6M605.5 221.9V224.5M609.5 221.7V224.5M618.5 224.5V226.9M623.5 221.3V224.5M624.5 221.8V224.5" stroke="#10d8d8" stroke-width="1" opacity="0.85"/><polyline points="625.8,320.27 627.8,319.85 630.3,319.28 631.8,320.09 634.3,318.81 636.8,320.01 639.3,318.69 641.8,319.61 644.3,319.76 646.8,319.80 648.8,320.35 650.3,319.45 652.8,320.14 654.6,319.50" fill="none" stroke="#10d8d8" stroke-width="2.6" stroke-linejoin="round"/><path d="M633.5 316.3V319.5M634.5 319.5V322.2M636.5 316.5V319.5M640.5 319.5V322.3M646.5 316.6V319.5M648.5 319.5V321.7M651.5 316.7V319.5M652.5 316.4V319.5" stroke="#10d8d8" stroke-width="1" opacity="0.85"/><polyline points="654.6,224.77 656.1,224.18 658.1,225.10 660.1,223.82 661.6,224.86 663.6,223.79 665.6,224.79 668.1,224.54 670.1,224.79 672.1,224.31 674.1,224.85 676.1,224.74 678.6,225.04 681.1,223.87 683.6,223.83 685.6,224.54 687.1,224.72 689.6,224.21 691.6,224.06 694.1,223.96 696.6,224.07 699.1,223.92 701.6,224.58 703.6,224.06 705.6,225.10 707.1,224.55 709.1,225.15 710.6,223.83 712.6,224.71 714.6,225.26 717.1,224.40 719.1,223.68 721.1,225.35 723.1,224.77 725.1,224.23 727.1,225.13 728.6,225.26 730.1,225.36 732.6,224.64 734.1,224.80 736.1,225.15 737.6,224.96 739.6,224.31 741.2,224.50" fill="none" stroke="#10d8d8" stroke-width="2.6" stroke-linejoin="round"/><path d="M658.5 221.8V224.5M672.5 221.7V224.5M676.5 222.2V224.5M677.5 221.5V224.5M678.5 222.4V224.5M681.5 221.7V224.5M684.5 221.7V224.5M690.5 222.1V224.5M692.5 221.3V224.5M693.5 224.5V226.8M694.5 224.5V226.8M699.5 222.1V224.5M703.5 224.5V226.7M704.5 221.9V224.5M711.5 224.5V227.4M713.5 222.1V224.5M718.5 224.5V227.3M719.5 224.5V227.2M726.5 222.0V224.5M728.5 221.5V224.5M729.5 221.8V224.5M730.5 224.5V227.4M736.5 224.5V226.7M738.5 221.4V224.5M739.5 224.5V226.6M740.5 221.6V224.5" stroke="#10d8d8" stroke-width="1" opacity="0.85"/><polyline points="741.2,320.31 743.2,319.00 745.2,319.87 747.2,319.83 748.7,320.16 751.2,318.84 752.7,320.11 754.7,319.96 757.2,320.03 759.7,319.61 761.2,319.16 763.2,319.18 764.7,318.87 767.2,320.36 769.2,320.35 770.0,319.50" fill="none" stroke="#10d8d8" stroke-width="2.6" stroke-linejoin="round"/><path d="M744.5 319.5V322.0M745.5 316.9V319.5M749.5 316.5V319.5M750.5 316.4V319.5M754.5 319.5V321.8M758.5 316.9V319.5M762.5 317.3V319.5M763.5 319.5V322.4M765.5 319.5V322.4M766.5 316.8V319.5" stroke="#10d8d8" stroke-width="1" opacity="0.85"/><polyline points="770.0,225.30 772.5,224.14 774.0,224.20 776.0,224.47 778.0,224.94 779.5,223.80 781.5,225.06 784.0,224.61 785.5,224.94 787.0,225.02 789.5,224.31 791.0,223.66 793.5,224.64 795.5,224.76 797.0,224.35 797.5,224.50" fill="none" stroke="#10d8d8" stroke-width="2.6" stroke-linejoin="round"/><path d="M771.5 221.6V224.5M775.5 222.5V224.5M778.5 224.5V226.8M779.5 222.2V224.5M780.5 222.2V224.5M783.5 224.5V227.1M784.5 222.2V224.5M786.5 224.5V227.1M791.5 224.5V226.6M792.5 222.4V224.5M795.5 224.5V227.2M796.5 222.3V224.5" stroke="#10d8d8" stroke-width="1" opacity="0.85"/><path d="M50.6 224.5V235.9L51.5 238.9V319.5M79.6 319.5V253.0L80.5 250.0V224.5M165.6 224.5V235.9L166.5 238.9V319.5M194.5 319.5V253.0L195.4 250.0V224.5M280.6 224.5V235.9L281.5 238.9V319.5M309.4 319.5V253.0L310.3 250.0V224.5M395.5 224.5V235.9L396.4 238.9V319.5M424.8 319.5V253.0L425.7 250.0V224.5M510.9 224.5V235.9L511.8 238.9V319.5M539.8 319.5V253.0L540.7 250.0V224.5M625.3 224.5V235.9L626.2 238.9V319.5M654.2 319.5V253.0L655.1 250.0V224.5M740.7 224.5V235.9L741.6 238.9V319.5M769.6 319.5V253.0L770.5 250.0V224.5" fill="none" stroke="#058a7a" stroke-width="1"/><polyline points="16.5,392.81 18.0,392.06 20.5,392.23 22.5,392.33 24.0,391.45 26.5,391.69 28.0,392.37 30.5,392.58 32.0,392.78 33.5,392.38 35.0,391.37 37.5,392.69 39.0,392.77 41.0,391.45 43.0,392.37 44.5,391.32 46.5,392.72 48.0,391.46 49.5,391.57 51.1,392.20" fill="none" stroke="#c800e8" stroke-width="2.6" stroke-linejoin="round"/><path d="M18.5 389.8V392.2M19.5 390.0V392.2M20.5 392.2V394.5M30.5 392.2V394.8M33.5 389.3V392.2M35.5 389.0V392.2M38.5 389.2V392.2M49.5 392.2V395.2" stroke="#c800e8" stroke-width="1" opacity="0.85"/><polyline points="51.1,494.80 52.6,493.22 54.6,494.45 56.1,493.53 58.6,493.92 60.1,494.68 62.6,494.73 64.5,494.00" fill="none" stroke="#c800e8" stroke-width="2.6" stroke-linejoin="round"/><path d="M53.5 491.2V494.0M60.5 494.0V496.7" stroke="#c800e8" stroke-width="1" opacity="0.85"/><polyline points="64.5,392.07 66.5,391.31 68.5,392.39 70.0,392.88 72.0,392.05 74.5,391.84 76.0,391.90 77.5,391.45 79.5,392.82 80.0,392.20" fill="none" stroke="#c800e8" stroke-width="2.6" stroke-linejoin="round"/><path d="M65.5 389.8V392.2M67.5 392.2V395.1M70.5 392.2V394.4M76.5 390.0V392.2" stroke="#c800e8" stroke-width="1" opacity="0.85"/><polyline points="80.0,348.19 82.0,347.16 84.0,348.32 86.5,348.02 89.0,346.94 90.5,347.30 92.0,346.60 93.5,346.79 93.6,347.50" fill="none" stroke="#c800e8" stroke-width="2.6" stroke-linejoin="round"/><path d="M83.5 347.5V349.9M84.5 344.8V347.5M91.5 344.8V347.5" stroke="#c800e8" stroke-width="1" opacity="0.85"/><polyline points="93.6,393.02 95.6,391.85 98.1,392.44 100.1,392.99 102.6,391.41 105.1,392.20 107.1,392.54 108.6,391.40 111.1,391.51 113.1,392.11 115.6,392.90 118.1,392.39 120.1,391.36 122.1,392.17 123.6,393.02 125.6,391.56 128.1,392.95 130.6,391.38 132.6,391.61 135.1,392.45 137.1,392.43 138.6,391.82 141.1,391.35 143.6,393.06 146.1,391.45 148.6,392.45 150.6,393.03 153.1,391.95 155.1,391.88 157.6,392.19 159.1,392.73 161.1,392.91 162.6,392.23 164.1,391.59 166.1,392.20" fill="none" stroke="#c800e8" stroke-width="2.6" stroke-linejoin="round"/><path d="M102.5 392.2V395.1M109.5 392.2V395.0M111.5 389.1V392.2M115.5 389.1V392.2M116.5 389.9V392.2M121.5 389.7V392.2M126.5 389.7V392.2M127.5 389.6V392.2M129.5 392.2V394.8M134.5 389.5V392.2M139.5 390.0V392.2M142.5 389.7V392.2M151.5 389.3V392.2M154.5 392.2V394.4M157.5 390.2V392.2M159.5 392.2V394.6M160.5 392.2V394.9M164.5 389.9V392.2" stroke="#c800e8" stroke-width="1" opacity="0.85"/><polyline points="166.1,493.53 167.6,494.72 169.1,494.44 171.6,493.79 173.6,493.34 176.1,494.68 178.1,494.20 180.0,494.00" fill="none" stroke="#c800e8" stroke-width="2.6" stroke-linejoin="round"/><path d="M173.5 494.0V496.4M176.5 492.0V494.0M178.5 490.9V494.0" stroke="#c800e8" stroke-width="1" opacity="0.85"/><polyline points="180.0,391.69 182.0,392.43 183.5,392.10 186.0,391.41 188.0,392.36 190.5,392.75 192.0,392.27 194.0,391.50 194.9,392.20" fill="none" stroke="#c800e8" stroke-width="2.6" stroke-linejoin="round"/><path d="M181.5 392.2V395.1M184.5 392.2V394.8M186.5 392.2V395.2M189.5 392.2V394.4M191.5 392.2V394.6M193.5 392.2V394.3" stroke="#c800e8" stroke-width="1" opacity="0.85"/><polyline points="194.9,346.80 196.9,347.52 199.4,347.34 201.9,348.16 203.4,348.05 205.9,347.19 207.9,346.73 208.7,347.50" fill="none" stroke="#c800e8" stroke-width="2.6" stroke-linejoin="round"/><path d="M200.5 347.5V350.1M201.5 345.3V347.5M203.5 344.4V347.5M204.5 344.6V347.5" stroke="#c800e8" stroke-width="1" opacity="0.85"/><polyline points="208.7,391.66 211.2,392.81 213.2,392.65 214.7,392.96 217.2,392.40 218.7,391.41 220.2,392.05 222.7,392.60 225.2,392.27 227.7,391.94 229.2,392.32 231.2,393.08 233.2,391.49 235.7,391.62 237.7,392.06 239.2,392.75 241.2,392.69 243.2,391.49 244.7,391.95 246.7,392.17 248.2,392.94 250.2,392.16 251.7,392.83 254.2,392.31 256.7,392.00 258.7,391.75 260.2,392.99 261.7,392.58 264.2,392.09 266.7,392.61 268.2,392.76 270.2,391.54 271.7,391.50 274.2,392.35 276.2,391.35 277.7,392.13 279.2,391.67 281.1,392.20" fill="none" stroke="#c800e8" stroke-width="2.6" stroke-linejoin="round"/><path d="M210.5 389.8V392.2M215.5 392.2V394.4M218.5 389.5V392.2M219.5 390.0V392.2M225.5 389.3V392.2M226.5 389.6V392.2M230.5 392.2V394.8M233.5 389.1V392.2M235.5 389.9V392.2M237.5 392.2V394.6M242.5 390.1V392.2M245.5 390.1V392.2M246.5 392.2V395.1M247.5 392.2V394.9M251.5 392.2V394.4M252.5 389.3V392.2M253.5 389.0V392.2M255.5 392.2V395.0M256.5 389.6V392.2M257.5 389.3V392.2M260.5 389.2V392.2M267.5 390.1V392.2M269.5 392.2V394.6M270.5 389.3V392.2M271.5 389.2V392.2M274.5 389.4V392.2M275.5 392.2V394.6M276.5 389.0V392.2M279.5 389.3V392.2" stroke="#c800e8" stroke-width="1" opacity="0.85"/><polyline points="281.1,494.63 282.6,493.26 284.6,493.64 286.6,493.37 289.1,494.14 291.1,494.48 292.6,493.24 294.1,493.30 294.5,494.00" fill="none" stroke="#c800e8" stroke-width="2.6" stroke-linejoin="round"/><path d="M283.5 494.0V496.4M287.5 494.0V496.8M289.5 492.0V494.0M290.5 491.1V494.0M292.5 490.9V494.0" stroke="#c800e8" stroke-width="1" opacity="0.85"/><polyline points="294.5,391.40 297.0,393.00 299.0,391.76 300.5,391.75 302.5,392.82 304.0,391.88 305.5,391.59 307.0,393.07 309.5,392.48 309.8,392.20" fill="none" stroke="#c800e8" stroke-width="2.6" stroke-linejoin="round"/><path d="M299.5 392.2V394.4M301.5 389.9V392.2" stroke="#c800e8" stroke-width="1" opacity="0.85"/><polyline points="309.8,347.56 311.3,346.66 313.3,347.37 315.3,347.26 317.8,346.82 319.8,346.89 322.3,346.70 323.7,347.50" fill="none" stroke="#c800e8" stroke-width="2.6" stroke-linejoin="round"/><path d="M316.5 345.2V347.5M317.5 347.5V350.4M318.5 345.2V347.5M321.5 345.0V347.5" stroke="#c800e8" stroke-width="1" opacity="0.85"/><polyline points="323.7,392.54 326.2,391.81 328.2,391.75 330.2,393.03 331.7,392.54 333.2,392.45 335.7,393.04 338.2,392.63 339.7,392.48 342.2,391.42 344.2,391.85 345.7,392.61 348.2,391.33 350.2,391.43 352.7,391.50 354.7,392.47 357.2,392.54 359.2,392.96 361.2,391.62 362.7,391.76 364.7,392.04 367.2,391.61 369.7,392.88 371.7,391.92 373.2,391.36 374.7,391.49 376.2,392.75 378.7,391.90 381.2,391.32 382.7,391.43 384.2,391.58 386.7,392.49 388.7,392.49 390.2,391.38 392.2,391.47 393.7,391.99 396.0,392.20" fill="none" stroke="#c800e8" stroke-width="2.6" stroke-linejoin="round"/><path d="M324.5 389.5V392.2M325.5 389.8V392.2M326.5 392.2V395.1M330.5 389.8V392.2M333.5 389.4V392.2M336.5 389.3V392.2M338.5 389.4V392.2M342.5 392.2V395.1M343.5 392.2V394.2M344.5 389.7V392.2M346.5 392.2V394.7M348.5 389.5V392.2M355.5 390.0V392.2M356.5 392.2V394.6M357.5 392.2V394.5M358.5 389.6V392.2M360.5 392.2V394.8M364.5 389.7V392.2M365.5 389.6V392.2M367.5 392.2V394.3M372.5 389.2V392.2M374.5 389.9V392.2M376.5 389.4V392.2M378.5 392.2V394.7M384.5 389.4V392.2M387.5 389.8V392.2M391.5 389.2V392.2" stroke="#c800e8" stroke-width="1" opacity="0.85"/><polyline points="396.0,493.13 398.0,494.72 399.5,493.91 401.0,493.61 402.5,494.61 404.5,494.45 407.0,493.46 408.5,493.82 409.5,494.00" fill="none" stroke="#c800e8" stroke-width="2.6" stroke-linejoin="round"/><path d="M397.5 491.6V494.0M399.5 491.6V494.0M403.5 494.0V496.9M404.5 494.0V496.5M405.5 494.0V496.8M406.5 494.0V497.0M408.5 491.8V494.0" stroke="#c800e8" stroke-width="1" opacity="0.85"/><polyline points="409.5,392.04 412.0,391.34 414.0,392.69 415.5,392.79 417.0,391.58 419.0,392.39 421.0,392.31 423.5,392.00 425.2,392.20" fill="none" stroke="#c800e8" stroke-width="2.6" stroke-linejoin="round"/><path d="M410.5 392.2V394.3M412.5 390.0V392.2M416.5 389.9V392.2M417.5 389.5V392.2M424.5 392.2V395.1" stroke="#c800e8" stroke-width="1" opacity="0.85"/><polyline points="425.2,347.33 426.7,347.38 428.2,348.34 430.2,346.73 431.7,348.17 433.7,346.73 435.7,348.13 438.2,347.78 438.3,347.50" fill="none" stroke="#c800e8" stroke-width="2.6" stroke-linejoin="round"/><path d="M436.5 347.5V349.9" stroke="#c800e8" stroke-width="1" opacity="0.85"/><polyline points="438.3,393.02 440.8,391.73 442.8,393.02 444.8,392.52 446.3,392.56 447.8,392.42 449.8,391.68 451.8,392.74 453.3,392.10 455.3,392.52 457.8,393.02 459.3,392.14 461.3,392.71 462.8,393.06 464.3,393.02 465.8,392.28 467.8,393.03 470.3,391.72 472.8,392.57 474.8,392.49 476.8,391.53 478.3,392.45 480.3,391.50 482.8,391.54 484.8,392.41 487.3,391.44 489.8,392.12 491.8,392.34 493.8,391.92 495.8,391.87 497.8,392.55 500.3,392.52 501.8,392.01 503.3,393.03 505.3,392.80 507.8,391.67 509.3,392.57 510.8,391.96 511.4,392.20" fill="none" stroke="#c800e8" stroke-width="2.6" stroke-linejoin="round"/><path d="M440.5 390.1V392.2M444.5 389.1V392.2M448.5 389.2V392.2M450.5 389.9V392.2M451.5 390.0V392.2M454.5 392.2V394.2M455.5 390.1V392.2M456.5 392.2V394.7M457.5 389.8V392.2M458.5 392.2V394.9M462.5 392.2V394.5M463.5 390.1V392.2M465.5 389.2V392.2M468.5 389.5V392.2M474.5 392.2V394.2M475.5 392.2V394.3M477.5 390.0V392.2M486.5 389.1V392.2M487.5 392.2V395.0M493.5 389.9V392.2M494.5 389.6V392.2M495.5 392.2V394.9M497.5 392.2V394.4M501.5 390.1V392.2M510.5 392.2V395.0" stroke="#c800e8" stroke-width="1" opacity="0.85"/><polyline points="511.4,493.67 513.4,493.19 515.9,493.53 517.4,494.78 518.9,493.93 520.4,493.68 522.9,494.39 524.9,494.33 525.0,494.00" fill="none" stroke="#c800e8" stroke-width="2.6" stroke-linejoin="round"/><path d="M514.5 491.9V494.0M517.5 494.0V496.7M518.5 494.0V496.3" stroke="#c800e8" stroke-width="1" opacity="0.85"/><polyline points="525.0,392.97 527.0,392.41 528.5,392.68 530.0,392.45 532.0,391.54 534.5,391.53 536.5,392.53 538.0,391.84 539.5,392.83 540.2,392.20" fill="none" stroke="#c800e8" stroke-width="2.6" stroke-linejoin="round"/><path d="M528.5 389.7V392.2M529.5 389.0V392.2M530.5 389.9V392.2M532.5 390.1V392.2M533.5 390.0V392.2M536.5 390.0V392.2" stroke="#c800e8" stroke-width="1" opacity="0.85"/><polyline points="540.2,346.82 541.7,347.42 544.2,346.81 546.2,348.30 548.7,348.23 550.7,347.01 552.2,347.69 554.2,347.97 554.3,347.50" fill="none" stroke="#c800e8" stroke-width="2.6" stroke-linejoin="round"/><path d="M543.5 345.3V347.5M545.5 344.5V347.5M547.5 347.5V349.8M550.5 344.5V347.5M552.5 344.6V347.5" stroke="#c800e8" stroke-width="1" opacity="0.85"/><polyline points="554.3,391.64 556.3,391.40 557.8,392.85 560.3,391.92 562.3,392.39 563.8,393.01 565.8,391.71 567.8,392.77 569.8,393.01 571.8,391.97 573.8,392.01 575.8,391.50 577.3,391.32 579.8,392.04 582.3,392.69 584.8,392.66 586.3,392.77 588.8,392.75 591.3,391.61 592.8,392.76 594.8,392.21 596.8,391.99 598.8,391.54 601.3,392.58 603.8,392.78 605.8,392.91 607.3,392.83 608.8,392.84 611.3,392.87 613.8,392.47 615.3,392.73 617.8,393.06 619.8,392.15 621.8,392.71 623.3,392.61 625.3,391.75 625.8,392.20" fill="none" stroke="#c800e8" stroke-width="2.6" stroke-linejoin="round"/><path d="M555.5 389.1V392.2M557.5 389.8V392.2M560.5 389.2V392.2M562.5 392.2V394.7M567.5 392.2V394.5M575.5 389.7V392.2M576.5 389.1V392.2M577.5 392.2V394.4M586.5 390.0V392.2M588.5 392.2V394.5M591.5 389.2V392.2M593.5 389.8V392.2M596.5 389.4V392.2M597.5 389.7V392.2M604.5 389.2V392.2M609.5 390.2V392.2M612.5 389.5V392.2M613.5 390.1V392.2M619.5 392.2V394.7M620.5 389.9V392.2M621.5 389.7V392.2M622.5 390.0V392.2" stroke="#c800e8" stroke-width="1" opacity="0.85"/><polyline points="625.8,493.52 627.3,494.02 629.3,493.20 630.8,494.54 633.3,493.40 634.8,494.07 636.3,494.03 637.8,493.52 639.3,494.73 640.0,494.00" fill="none" stroke="#c800e8" stroke-width="2.6" stroke-linejoin="round"/><path d="M628.5 491.4V494.0M630.5 494.0V496.8M634.5 491.0V494.0" stroke="#c800e8" stroke-width="1" opacity="0.85"/><polyline points="640.0,391.88 641.5,392.45 644.0,391.90 646.5,391.74 648.0,391.71 650.0,391.94 652.0,391.85 653.5,392.44 654.6,392.20" fill="none" stroke="#c800e8" stroke-width="2.6" stroke-linejoin="round"/><path d="M641.5 390.0V392.2M642.5 392.2V394.7M643.5 392.2V394.7M649.5 392.2V394.8M650.5 390.0V392.2M651.5 389.4V392.2" stroke="#c800e8" stroke-width="1" opacity="0.85"/><polyline points="654.6,347.24 656.6,347.20 659.1,347.84 661.1,347.76 663.1,348.16 665.6,347.59 667.1,348.13 669.3,347.50" fill="none" stroke="#c800e8" stroke-width="2.6" stroke-linejoin="round"/><path d="M661.5 344.7V347.5M663.5 344.7V347.5" stroke="#c800e8" stroke-width="1" opacity="0.85"/><polyline points="669.3,391.70 670.8,392.29 672.8,392.47 674.8,391.51 676.3,392.41 678.3,392.09 680.3,391.95 681.8,391.93 684.3,392.73 686.3,392.45 688.3,391.51 690.3,392.00 692.8,392.32 694.8,391.33 696.8,391.42 699.3,392.27 701.3,392.90 703.3,392.78 704.8,392.99 706.8,391.34 708.3,391.68 710.8,392.75 712.3,391.86 713.8,391.40 715.8,391.52 718.3,392.93 719.8,393.00 722.3,392.29 723.8,392.69 725.3,392.08 726.8,391.37 728.8,392.85 730.8,392.06 733.3,392.87 734.8,392.37 736.8,391.37 738.3,391.59 739.8,391.34 741.2,392.20" fill="none" stroke="#c800e8" stroke-width="2.6" stroke-linejoin="round"/><path d="M671.5 389.6V392.2M672.5 390.0V392.2M675.5 392.2V394.3M681.5 389.4V392.2M683.5 389.1V392.2M693.5 389.7V392.2M694.5 389.4V392.2M697.5 390.1V392.2M702.5 389.4V392.2M710.5 392.2V394.6M716.5 389.1V392.2M717.5 392.2V395.2M718.5 392.2V394.9M720.5 389.5V392.2M733.5 389.7V392.2M734.5 389.7V392.2M735.5 392.2V394.7M737.5 389.5V392.2M738.5 389.7V392.2" stroke="#c800e8" stroke-width="1" opacity="0.85"/><polyline points="741.2,493.88 743.7,494.56 745.2,494.41 747.7,493.76 749.2,493.99 751.7,493.64 753.2,494.28 755.0,494.00" fill="none" stroke="#c800e8" stroke-width="2.6" stroke-linejoin="round"/><path d="M743.5 494.0V496.5M749.5 494.0V496.6M750.5 494.0V496.7M753.5 491.0V494.0" stroke="#c800e8" stroke-width="1" opacity="0.85"/><polyline points="755.0,392.76 757.0,391.40 759.5,392.63 761.0,391.93 763.0,392.84 765.0,392.77 766.5,392.10 768.0,391.46 769.5,391.69 770.0,392.20" fill="none" stroke="#c800e8" stroke-width="2.6" stroke-linejoin="round"/><path d="M761.5 392.2V394.3M763.5 390.0V392.2M766.5 389.1V392.2" stroke="#c800e8" stroke-width="1" opacity="0.85"/><polyline points="770.0,347.05 771.5,347.00 774.0,347.14 775.5,347.74 778.0,347.72 780.0,346.98 782.0,348.24 784.0,347.83 784.3,347.50" fill="none" stroke="#c800e8" stroke-width="2.6" stroke-linejoin="round"/><path d="M775.5 347.5V349.8M777.5 345.1V347.5" stroke="#c800e8" stroke-width="1" opacity="0.85"/><polyline points="784.3,391.48 786.3,392.67 788.8,391.89 790.8,392.89 792.8,391.98 794.3,393.07 795.8,392.20 797.5,392.20" fill="none" stroke="#c800e8" stroke-width="2.6" stroke-linejoin="round"/><path d="M788.5 392.2V394.2M789.5 392.2V394.3M790.5 392.2V394.8" stroke="#c800e8" stroke-width="1" opacity="0.85"/><path d="M51.1 392.2V494.0M64.5 392.2V494.0M80.0 347.5V392.2M93.6 347.5V392.2M166.1 392.2V494.0M180.0 392.2V494.0M194.9 347.5V392.2M208.7 347.5V392.2M281.1 392.2V494.0M294.5 392.2V494.0M309.8 347.5V392.2M323.7 347.5V392.2M396.0 392.2V494.0M409.5 392.2V494.0M425.2 347.5V392.2M438.3 347.5V392.2M511.4 392.2V494.0M525.0 392.2V494.0M540.2 347.5V392.2M554.3 347.5V392.2M625.8 392.2V494.0M640.0 392.2V494.0M654.6 347.5V392.2M669.3 347.5V392.2M741.2 392.2V494.0M755.0 392.2V494.0M770.0 347.5V392.2M784.3 347.5V392.2" fill="none" stroke="#b000d0" stroke-width="1"/><path d="M221.5 1.5 Q220 1.5 220 3 V10 Q220 11.5 221.5 11.5" fill="none" stroke="#d8d0c8" stroke-width="1.2"/><path d="M594 1.5 Q595.5 1.5 595.5 3 V10 Q595.5 11.5 594 11.5" fill="none" stroke="#d8d0c8" stroke-width="1.2"/><rect x="222" y="5" width="372" height="2" fill="#800080"/><text x="0.20" y="11.40" fill="#000" stroke="#000" stroke-width="0.1" style="font-family:'Liberation Serif', serif;font-size:15.20px;font-weight:bold;letter-spacing:-0.070px;white-space:pre" >Tek</text><text x="28.00" y="9.80" fill="#f0f0f8" stroke="#f0f0f8" stroke-width="0.1" style="font-family:'Liberation Sans', sans-serif;font-size:12.40px;font-weight:bold;letter-spacing:-0.453px;white-space:pre" >Run</text><text x="722.90" y="10.10" fill="#f0f0f8" stroke="#f0f0f8" stroke-width="0.55" style="font-family:'Liberation Sans', sans-serif;font-size:12.40px;font-weight:normal;letter-spacing:1.092px;white-space:pre" >Trig’d</text><path d="M405 0.5 H410.5 L407.75 3 Z" fill="#ffa000"/><rect x="405" y="3.5" width="6.5" height="8.5" rx="1.5" fill="#ffa000"/><path d="M406.5 5 H410 M408.25 5 V10.5" stroke="#000" stroke-width="1.3"/><path d="M403 13 H412 L407.4 17.6 Z" fill="#ffa000"/><path d="M405 19.5 Q405 18.4 406 18.4 H413.8 Q414.8 18.4 414.8 19.5 V27.5 L409.9 30.5 L405 27.5 Z" fill="#ffa000"/><path d="M406.6 21 H413.2 M409.9 21 V28" stroke="#000" stroke-width="1.7"/><path d="M789 108 L793.8 104 V106.7 H797.5 V109.3 H793.8 V112 Z" fill="#e8e800"/><path d="M0.75 157.6 H9.5 L14.8 163.8 L9.5 170.2 H0.75 Z" fill="#000" stroke="#e8e800" stroke-width="1.5"/><text x="4.00" y="167.80" fill="#e8e800" stroke="#e8e800" stroke-width="0.2" style="font-family:'Liberation Sans', sans-serif;font-size:12.32px;font-weight:bold;letter-spacing:0.000px;white-space:pre" >1</text><path d="M0.75 314.8 H9.5 L14.8 321.2 L9.5 327.4 H0.75 Z" fill="#000" stroke="#10d8d8" stroke-width="1.5"/><text x="2.90" y="325.60" fill="#10d8d8" stroke="#10d8d8" stroke-width="0.2" style="font-family:'Liberation Sans', sans-serif;font-size:12.29px;font-weight:bold;letter-spacing:0.000px;white-space:pre" >2</text><path d="M0.75 488.3 H9.5 L14.8 494.6 L9.5 500.9 H0.75 Z" fill="#c020d0" stroke="#c020d0" stroke-width="1"/><text x="2.70" y="498.60" fill="#000" stroke="#000" stroke-width="0.2" style="font-family:'Liberation Sans', sans-serif;font-size:10.57px;font-weight:bold;letter-spacing:0.000px;white-space:pre" >3</text><rect x="16.2" y="524.2" width="432.8" height="15.599999999999909" rx="5" fill="#000" stroke="#2c3a8c" stroke-width="3"/><rect x="16.2" y="524.2" width="432.8" height="15.599999999999909" rx="5" fill="#000" stroke="#c4c2cc" stroke-width="1.5"/><rect x="16.2" y="541.5" width="432.8" height="43.299999999999955" rx="5" fill="#000" stroke="#2c3a8c" stroke-width="3"/><rect x="16.2" y="541.5" width="432.8" height="43.299999999999955" rx="5" fill="#000" stroke="#c4c2cc" stroke-width="1.5"/><rect x="456.7" y="524.2" width="114.50000000000006" height="28.199999999999932" rx="6" fill="#000" stroke="#2c3a8c" stroke-width="3"/><rect x="456.7" y="524.2" width="114.50000000000006" height="28.199999999999932" rx="6" fill="#000" stroke="#c4c2cc" stroke-width="1.5"/><rect x="579.8" y="524.2" width="82.40000000000009" height="28.09999999999991" rx="6" fill="#000" stroke="#2c3a8c" stroke-width="3"/><rect x="579.8" y="524.2" width="82.40000000000009" height="28.09999999999991" rx="6" fill="#000" stroke="#c4c2cc" stroke-width="1.5"/><rect x="670.2" y="524.2" width="127.0" height="28.59999999999991" rx="6" fill="#000" stroke="#2c3a8c" stroke-width="3"/><rect x="670.2" y="524.2" width="127.0" height="28.59999999999991" rx="6" fill="#000" stroke="#c4c2cc" stroke-width="1.5"/><rect x="711.2" y="570.2" width="86.79999999999995" height="28.0" rx="6" fill="#000" stroke="#2c3a8c" stroke-width="3"/><rect x="711.2" y="570.2" width="86.79999999999995" height="28.0" rx="6" fill="#000" stroke="#c4c2cc" stroke-width="1.5"/><rect x="15.75" y="522" width="782.5" height="1.5" fill="#86a8ee"/><rect x="20" y="526.2" width="19.799999999999997" height="12.0" rx="6.0" fill="#e8e800"/><text x="27.40" y="536.40" fill="#000" stroke="#000" stroke-width="0.35" style="font-family:'Liberation Sans', sans-serif;font-size:12.00px;font-weight:normal;letter-spacing:0.000px;white-space:pre" >1</text><text x="53.20" y="535.50" fill="#e8e800" stroke="#e8e800" stroke-width="0.35" style="font-family:'Liberation Sans', sans-serif;font-size:11.70px;font-weight:normal;letter-spacing:1.035px;white-space:pre" >5.00 V</text><text x="112.00" y="532.00" fill="#e8e800" stroke="#e8e800" stroke-width="0.1" style="font-family:'Liberation Sans', sans-serif;font-size:6.50px;font-weight:normal;letter-spacing:0.000px;white-space:pre" opacity="0.75">B</text><text x="114.20" y="536.00" fill="#e8e800" stroke="#e8e800" stroke-width="0.1" style="font-family:'Liberation Sans', sans-serif;font-size:6.50px;font-weight:normal;letter-spacing:0.000px;white-space:pre" opacity="0.75">W</text><rect x="128.8" y="526.2" width="19.80000000000001" height="12.0" rx="6.0" fill="#10d8d8"/><text x="136.20" y="536.40" fill="#000" stroke="#000" stroke-width="0.35" style="font-family:'Liberation Sans', sans-serif;font-size:12.00px;font-weight:normal;letter-spacing:0.000px;white-space:pre" >2</text><text x="162.20" y="535.50" fill="#10d8d8" stroke="#10d8d8" stroke-width="0.35" style="font-family:'Liberation Sans', sans-serif;font-size:11.70px;font-weight:normal;letter-spacing:1.035px;white-space:pre" >5.00 V</text><text x="221.00" y="532.00" fill="#10d8d8" stroke="#10d8d8" stroke-width="0.1" style="font-family:'Liberation Sans', sans-serif;font-size:6.50px;font-weight:normal;letter-spacing:0.000px;white-space:pre" opacity="0.75">B</text><text x="223.20" y="536.00" fill="#10d8d8" stroke="#10d8d8" stroke-width="0.1" style="font-family:'Liberation Sans', sans-serif;font-size:6.50px;font-weight:normal;letter-spacing:0.000px;white-space:pre" opacity="0.75">W</text><rect x="237" y="526.2" width="19.80000000000001" height="12.0" rx="6.0" fill="#b828c8"/><text x="244.40" y="536.40" fill="#000" stroke="#000" stroke-width="0.35" style="font-family:'Liberation Sans', sans-serif;font-size:12.00px;font-weight:normal;letter-spacing:0.000px;white-space:pre" >3</text><text x="270.60" y="535.50" fill="#b828c8" stroke="#b828c8" stroke-width="0.35" style="font-family:'Liberation Sans', sans-serif;font-size:11.70px;font-weight:normal;letter-spacing:1.035px;white-space:pre" >5.00 V</text><text x="329.40" y="532.00" fill="#b828c8" stroke="#b828c8" stroke-width="0.1" style="font-family:'Liberation Sans', sans-serif;font-size:6.50px;font-weight:normal;letter-spacing:0.000px;white-space:pre" opacity="0.75">B</text><text x="331.60" y="536.00" fill="#b828c8" stroke="#b828c8" stroke-width="0.1" style="font-family:'Liberation Sans', sans-serif;font-size:6.50px;font-weight:normal;letter-spacing:0.000px;white-space:pre" opacity="0.75">W</text><text x="123.25" y="552.75" fill="#e6e6e6" stroke="#e6e6e6" stroke-width="0.35" style="font-family:'Liberation Sans', sans-serif;font-size:11.70px;font-weight:normal;letter-spacing:0.975px;white-space:pre" >Value</text><text x="192.70" y="552.75" fill="#e6e6e6" stroke="#e6e6e6" stroke-width="0.35" style="font-family:'Liberation Sans', sans-serif;font-size:11.70px;font-weight:normal;letter-spacing:1.079px;white-space:pre" >Mean</text><text x="257.50" y="552.75" fill="#e6e6e6" stroke="#e6e6e6" stroke-width="0.35" style="font-family:'Liberation Sans', sans-serif;font-size:11.70px;font-weight:normal;letter-spacing:1.826px;white-space:pre" >Min</text><text x="321.20" y="552.75" fill="#e6e6e6" stroke="#e6e6e6" stroke-width="0.35" style="font-family:'Liberation Sans', sans-serif;font-size:11.70px;font-weight:normal;letter-spacing:0.724px;white-space:pre" >Max</text><text x="384.60" y="552.75" fill="#e6e6e6" stroke="#e6e6e6" stroke-width="0.35" style="font-family:'Liberation Sans', sans-serif;font-size:11.70px;font-weight:normal;letter-spacing:0.947px;white-space:pre" >Std Dev</text><rect x="20" y="557" width="20" height="12.5" rx="6.25" fill="#e8e800"/><text x="27.50" y="567.45" fill="#000" stroke="#000" stroke-width="0.35" style="font-family:'Liberation Sans', sans-serif;font-size:12.00px;font-weight:normal;letter-spacing:0.000px;white-space:pre" >1</text><text x="43.50" y="567.00" fill="#e8e800" stroke="#e8e800" stroke-width="0.35" style="font-family:'Liberation Sans', sans-serif;font-size:11.70px;font-weight:normal;letter-spacing:1.903px;white-space:pre" >+Duty</text><text x="124.30" y="567.00" fill="#e8e800" stroke="#e8e800" stroke-width="0.35" style="font-family:'Liberation Sans', sans-serif;font-size:11.70px;font-weight:normal;letter-spacing:0.662px;white-space:pre" >25.12 %</text><text x="193.00" y="567.00" fill="#e8e800" stroke="#e8e800" stroke-width="0.35" style="font-family:'Liberation Sans', sans-serif;font-size:11.70px;font-weight:normal;letter-spacing:1.107px;white-space:pre" >32.69</text><text x="257.20" y="567.00" fill="#e8e800" stroke="#e8e800" stroke-width="0.35" style="font-family:'Liberation Sans', sans-serif;font-size:11.70px;font-weight:normal;letter-spacing:1.107px;white-space:pre" >23.54</text><text x="321.20" y="567.00" fill="#e8e800" stroke="#e8e800" stroke-width="0.35" style="font-family:'Liberation Sans', sans-serif;font-size:11.70px;font-weight:normal;letter-spacing:1.132px;white-space:pre" >91.76</text><text x="385.75" y="567.00" fill="#e8e800" stroke="#e8e800" stroke-width="0.35" style="font-family:'Liberation Sans', sans-serif;font-size:11.70px;font-weight:normal;letter-spacing:1.186px;white-space:pre" >11.54</text><rect x="20" y="571" width="20" height="12.299999999999955" rx="6.149999999999977" fill="#10d8d8"/><text x="27.50" y="581.35" fill="#000" stroke="#000" stroke-width="0.35" style="font-family:'Liberation Sans', sans-serif;font-size:12.00px;font-weight:normal;letter-spacing:0.000px;white-space:pre" >2</text><text x="43.50" y="580.90" fill="#10d8d8" stroke="#10d8d8" stroke-width="0.35" style="font-family:'Liberation Sans', sans-serif;font-size:11.70px;font-weight:normal;letter-spacing:1.903px;white-space:pre" >+Duty</text><text x="124.30" y="580.90" fill="#10d8d8" stroke="#10d8d8" stroke-width="0.35" style="font-family:'Liberation Sans', sans-serif;font-size:11.70px;font-weight:normal;letter-spacing:0.662px;white-space:pre" >74.98 %</text><text x="193.00" y="580.90" fill="#10d8d8" stroke="#10d8d8" stroke-width="0.35" style="font-family:'Liberation Sans', sans-serif;font-size:11.70px;font-weight:normal;letter-spacing:1.107px;white-space:pre" >61.22</text><text x="257.20" y="580.90" fill="#10d8d8" stroke="#10d8d8" stroke-width="0.35" style="font-family:'Liberation Sans', sans-serif;font-size:11.70px;font-weight:normal;letter-spacing:1.323px;white-space:pre" >11.32</text><text x="321.20" y="580.90" fill="#10d8d8" stroke="#10d8d8" stroke-width="0.35" style="font-family:'Liberation Sans', sans-serif;font-size:11.70px;font-weight:normal;letter-spacing:1.132px;white-space:pre" >87.50</text><text x="385.75" y="580.90" fill="#10d8d8" stroke="#10d8d8" stroke-width="0.35" style="font-family:'Liberation Sans', sans-serif;font-size:11.70px;font-weight:normal;letter-spacing:0.969px;white-space:pre" >12.47</text><text x="460.60" y="535.90" fill="#e6e6e6" stroke="#e6e6e6" stroke-width="0.35" style="font-family:'Liberation Sans', sans-serif;font-size:11.70px;font-weight:normal;letter-spacing:1.327px;white-space:pre" >4.00ms</text><rect x="460.3" y="539.6" width="9.3" height="10.5" rx="2" fill="#ffa000"/><path d="M462 542 H468 M465 542 V548.5" stroke="#000" stroke-width="1.6"/><path d="M470.4 544.5 H474.5" stroke="#ffa000" stroke-width="1.5"/><path d="M474 541.8 L477.6 544.5 L474 547.2 Z" fill="#ffa000"/><path d="M477.9 542.2 H486.5 L482.2 546.8 Z" fill="#ffa000"/><rect x="487.6" y="543.8" width="6.8" height="1.5" fill="#ffa000"/><text x="497.75" y="549.00" fill="#ffa000" stroke="#ffa000" stroke-width="0.35" style="font-family:'Liberation Sans', sans-serif;font-size:11.70px;font-weight:normal;letter-spacing:1.158px;white-space:pre" >160.000µs</text><text x="584.60" y="535.70" fill="#e6e6e6" stroke="#e6e6e6" stroke-width="0.35" style="font-family:'Liberation Sans', sans-serif;font-size:11.70px;font-weight:normal;letter-spacing:1.188px;white-space:pre" >250kS/s</text><text x="584.60" y="549.00" fill="#e6e6e6" stroke="#e6e6e6" stroke-width="0.35" style="font-family:'Liberation Sans', sans-serif;font-size:11.70px;font-weight:normal;letter-spacing:1.318px;white-space:pre" >10k points</text><rect x="694.5" y="526.7" width="19.399999999999977" height="11.299999999999955" rx="5.649999999999977" fill="#e8e800"/><text x="701.70" y="536.55" fill="#000" stroke="#000" stroke-width="0.35" style="font-family:'Liberation Sans', sans-serif;font-size:12.00px;font-weight:normal;letter-spacing:0.000px;white-space:pre" >1</text><path d="M724.9 535.3 H728.3 L731 529 H734.1" fill="none" stroke="#e6e6e6" stroke-width="1.5"/><text x="751.80" y="535.80" fill="#e6e6e6" stroke="#e6e6e6" stroke-width="0.35" style="font-family:'Liberation Sans', sans-serif;font-size:11.70px;font-weight:normal;letter-spacing:0.995px;white-space:pre" >5.50 V</text><text x="715.40" y="582.70" fill="#e6e6e6" stroke="#e6e6e6" stroke-width="0.35" style="font-family:'Liberation Sans', sans-serif;font-size:11.70px;font-weight:normal;letter-spacing:1.040px;white-space:pre" >12 Jan  2020</text><text x="715.40" y="594.70" fill="#e6e6e6" stroke="#e6e6e6" stroke-width="0.35" style="font-family:'Liberation Sans', sans-serif;font-size:11.70px;font-weight:normal;letter-spacing:1.265px;white-space:pre" >21:32:26</text></svg>
</body></html>
